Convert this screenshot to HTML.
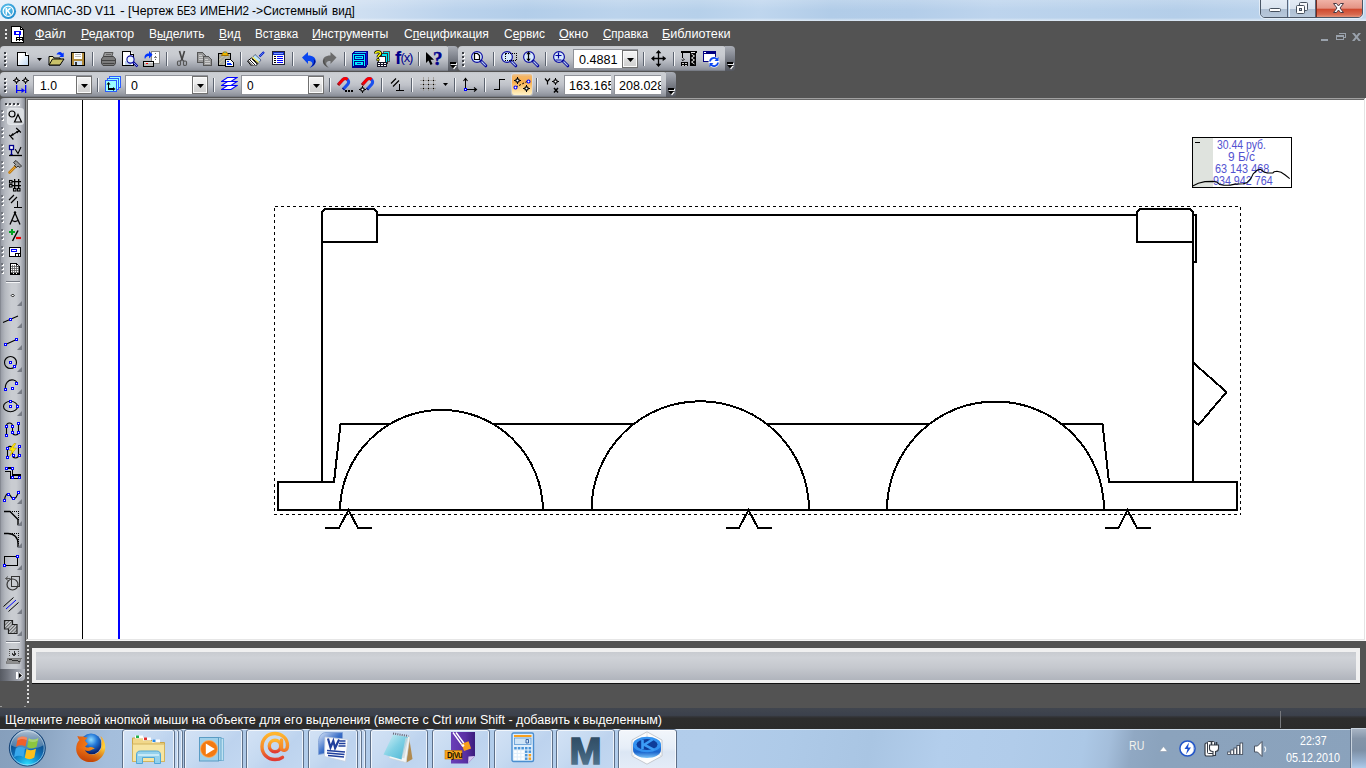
<!DOCTYPE html>
<html lang="ru">
<head>
<meta charset="utf-8">
<title>КОМПАС-3D V11</title>
<style>
*{box-sizing:border-box;margin:0;padding:0}
html,body{width:1366px;height:768px;overflow:hidden;background:#535353;font-family:"Liberation Sans",sans-serif;}
.abs{position:absolute}
#titlebar{left:0;top:0;width:1366px;height:21px;background:linear-gradient(100deg,#e6eef8 0,#e2ebf6 150px,#d9e6f4 300px,#cadcf0 380px,#bad2ec 450px,#b2cde9 520px,#bbd3ec 610px,#b6d0ea 690px,#bfd6ee 750px,#b1cce8 820px,#b3cde9 900px,#bdd4ed 980px,#b8d1eb 1080px,#b4cee9 1160px,#bbd3ec 1260px,#c2d8ef 1366px)}
#titlebar .shade{left:0;top:0;width:1366px;height:21px;background:linear-gradient(180deg,rgba(255,255,255,.18) 0,rgba(255,255,255,0) 50%,rgba(255,255,255,0) 85%,rgba(255,255,255,.55) 100%)}
#title{left:21px;top:3px;font-size:12px;line-height:14px;color:#000;white-space:nowrap;letter-spacing:-0.05px}
#menubar{left:0;top:21px;width:1366px;height:25px;background:#535353}
.mi{position:absolute;top:26px;font-size:13px;line-height:15px;color:#fff;white-space:nowrap}
.mi u{text-decoration:underline;text-underline-offset:1px}
.tb{position:absolute;height:25px;border-radius:4px 0 0 4px;background:linear-gradient(180deg,#bfc3ca 0,#ced1d6 12%,#c3c6cc 50%,#a9adb6 85%,#8f939c 100%)}
.tbend{position:absolute;height:25px;width:10px;border-radius:0 4px 4px 0;background:linear-gradient(180deg,#8b8f98 0,#6f737c 50%,#4d5058 100%)}
.sep{position:absolute;width:2px;height:15px;background:linear-gradient(90deg,#6d7078 0,#6d7078 50%,#e6e8eb 50%,#e6e8eb 100%)}
.grip{position:absolute;width:3px;height:16px;background:repeating-linear-gradient(180deg,#3a3a3a 0,#3a3a3a 2px,transparent 2px,transparent 4px)}
.grip:after{content:"";position:absolute;left:1px;top:1px;width:2px;height:16px;background:repeating-linear-gradient(180deg,#fff 0,#fff 1px,transparent 1px,transparent 4px);opacity:.8}
.combo{position:absolute;height:19px;background:#fff;font-size:13px;line-height:19px;color:#000;padding-left:5px;white-space:nowrap;overflow:hidden}
.cbtn{position:absolute;width:16px;height:19px;background:linear-gradient(180deg,#f2f2f2 0,#e4e4e4 50%,#cfcfcf 100%);border:1px solid #8a8a8a;border-radius:1px}
.cbtn:after{content:"";position:absolute;left:3px;top:7px;border:4px solid transparent;border-top:4px solid #000;border-bottom:0}
#canvas{left:28px;top:100px;width:1336px;height:539px;background:#fff}
#lefttb{left:0;top:98px;width:25px;height:572px;border-radius:4px 0 0 0;background:linear-gradient(90deg,#8d919b 0,#a6aab3 12%,#c2c5cb 40%,#cdd0d5 60%,#c0c3ca 80%,#9da1aa 100%)}
#status{left:0;top:708px;width:1366px;height:21px;background:linear-gradient(180deg,#41464f 0,#3c414c 35%,#333437 42%,#2d2d2d 50%,#2b2b2b 100%)}
#statustext{left:5px;top:712px;font-size:12.5px;line-height:15px;color:#fff;white-space:nowrap}
#taskbar{left:0;top:729px;width:1366px;height:39px;background:linear-gradient(100deg,#869fbc 0,#8aa4c1 40px,#98b1ce 70px,#a4bedc 110px,#b0cbe9 300px,#b2cdeb 700px,#aecae8 780px,#a9c5e3 860px,#b3ceec 930px,#b1ccea 1000px,#acc8e6 1070px,#a4bedb 1095px,#90a8c3 1118px,#8ba3bd 1145px,#8aa2bc 1366px)}
.wtxt{left:1192px;width:100px;text-align:center;font-size:11px;letter-spacing:-0.25px;line-height:12px;color:#5b5bd0;white-space:nowrap}
</style>
</head>
<body>
<!-- TITLE BAR -->
<div id="titlebar" class="abs"><div class="shade abs"></div></div>

<div class="abs" style="left:20.6px;top:4px;font-size:12px;line-height:14px;color:#000;font-weight:400;white-space:pre;transform:scaleX(1.0015);transform-origin:0 0;">КОМПАС-3D V11</div>
<div class="abs" style="left:120.1px;top:4px;font-size:12px;line-height:14px;color:#000;font-weight:400;white-space:pre;transform:scaleX(1.1750);transform-origin:0 0;">-</div>
<div class="abs" style="left:127.5px;top:4px;font-size:12px;line-height:14px;color:#000;font-weight:400;white-space:pre;transform:scaleX(1.0283);transform-origin:0 0;">[Чертеж</div>
<div class="abs" style="left:176.7px;top:4px;font-size:12px;line-height:14px;color:#000;font-weight:400;white-space:pre;transform:scaleX(0.8393);transform-origin:0 0;">БЕЗ</div>
<div class="abs" style="left:199.5px;top:4px;font-size:12px;line-height:14px;color:#000;font-weight:400;white-space:pre;transform:scaleX(0.9705);transform-origin:0 0;">ИМЕНИ2</div>
<div class="abs" style="left:252.2px;top:4px;font-size:12px;line-height:14px;color:#000;font-weight:400;white-space:pre;transform:scaleX(1.0117);transform-origin:0 0;">-&gt;Системный</div>
<div class="abs" style="left:331.9px;top:4px;font-size:12px;line-height:14px;color:#000;font-weight:400;white-space:pre;transform:scaleX(0.9692);transform-origin:0 0;">вид]</div>
<svg class="abs" style="left:0px;top:3px" width="16.500" height="16.500" viewBox="0 0 17 17"><defs><radialGradient id="kg" cx="40%" cy="35%" r="70%"><stop offset="0" stop-color="#6fd0f5"/><stop offset="1" stop-color="#1a86c8"/></radialGradient></defs><circle cx="8.500" cy="8.500" r="8" fill="url(#kg)"/><circle cx="8.500" cy="8.500" r="5.300" fill="none" stroke="#fff" stroke-width="1.300"/><path d="M6.500 5.200V12M6.500 8.800L10.800 5.300M7.800 8L11 12" stroke="#fff" stroke-width="1.500" fill="none"/></svg>
<div class="abs" style="left:1260px;top:-1px;width:103px;height:19px;border:1px solid #4a5666;border-radius:0 0 5px 5px;overflow:hidden;box-shadow:0 0 0 1px rgba(255,255,255,.55)">
<div class="abs" style="left:0;top:0;width:27px;height:18px;background:linear-gradient(180deg,#e3ebf5 0,#d9e3ef 48%,#aebfd3 52%,#b9c9dc 100%);border-right:1px solid #59657a"></div>
<div class="abs" style="left:28px;top:0;width:27px;height:18px;background:linear-gradient(180deg,#e3ebf5 0,#d9e3ef 48%,#aebfd3 52%,#b9c9dc 100%);border-right:1px solid #59657a;border-left:1px solid rgba(255,255,255,.7)"></div>
<div class="abs" style="left:55px;top:0;width:47px;height:18px;background:linear-gradient(180deg,#f0b2a6 0,#e49384 45%,#cf4a30 52%,#d8694f 80%,#e8a48e 100%);border-left:1px solid #7a2a1c"></div>
</div>
<svg class="abs" style="left:1260px;top:0" width="104" height="18" viewBox="0 0 104 18">
<rect x="9.500" y="8.500" width="11" height="3" rx="1" fill="#fff" stroke="#46505e" stroke-width="1"/>
<rect x="39.500" y="2.500" width="8" height="8" rx="1" fill="#f4f6f9" stroke="#46505e"/>
<rect x="36.500" y="5.500" width="8" height="8" rx="1" fill="#fff" stroke="#46505e"/>
<rect x="39.500" y="8.500" width="2" height="2" fill="#c7d2df" stroke="#46505e"/>
<path d="M73.500 3.500h3l2 2.500l2-2.500h3l-3.500 4.500l3.500 4.500h-3l-2-2.500l-2 2.500h-3l3.500-4.500z" fill="#fff" stroke="#4a3a44" stroke-width="1"/>
</svg>
<!--CAPTION-->
<!-- MENU BAR -->
<div id="menubar" class="abs"></div>
<svg class="abs" style="left:1318px;top:30px" width="46" height="14" viewBox="0 0 46 14" shape-rendering="crispEdges">
<rect x="3" y="9" width="7" height="2" fill="#9aa2ac"/>
<path d="M20.500 3.500h7v4h-2M18.500 5.500h7v4h-7z" fill="none" stroke="#9aa2ac" stroke-width="1"/><rect x="18" y="5" width="8" height="2" fill="#9aa2ac"/>
<path d="M34 3h2.500l2 2.500l2-2.500h2.500l-3.200 4l3.200 4h-2.500l-2-2.500l-2 2.500h-2.500l3.200-4z" fill="#9aa2ac" shape-rendering="auto"/>
</svg>
<div class="abs" style="left:5px;top:29px;width:2px;height:2px;background:#e8e8e8"></div><div class="abs" style="left:5px;top:33px;width:2px;height:2px;background:#e8e8e8"></div><div class="abs" style="left:5px;top:37px;width:2px;height:2px;background:#e8e8e8"></div>
<svg class="abs" style="left:11px;top:26px" width="14" height="17" viewBox="0 0 14 17" shape-rendering="crispEdges"><path d="M.5.500h9l3 3v12.500h-12z" fill="#fff" stroke="#000"/><path d="M9.500.500v3h3" fill="none" stroke="#000"/><rect x="3" y="5" width="7" height="4" fill="#00f"/><rect x="5" y="6" width="3" height="2" fill="#fff"/><rect x="8" y="6" width="1" height="5" fill="#00f"/><rect x="5" y="11" width="7" height="4" fill="#000"/><rect x="6" y="12" width="2" height="1" fill="#fff"/><rect x="9" y="12" width="2" height="1" fill="#fff"/><rect x="6" y="14" width="2" height="1" fill="#fff"/><rect x="9" y="14" width="2" height="1" fill="#fff"/></svg>
<div class="abs" style="left:35.1px;top:27px;font-size:12.5px;line-height:15px;color:#fff;font-weight:400;white-space:pre;transform:scaleX(0.9989);transform-origin:0 0;text-underline-offset:1px;"><u>Ф</u>айл</div>
<div class="abs" style="left:80.5px;top:27px;font-size:12.5px;line-height:15px;color:#fff;font-weight:400;white-space:pre;transform:scaleX(0.9886);transform-origin:0 0;text-underline-offset:1px;"><u>Р</u>едактор</div>
<div class="abs" style="left:148.70000000000002px;top:27px;font-size:12.5px;line-height:15px;color:#fff;font-weight:400;white-space:pre;transform:scaleX(0.9641);transform-origin:0 0;text-underline-offset:1px;">В<u>ы</u>делить</div>
<div class="abs" style="left:218.70000000000002px;top:27px;font-size:12.5px;line-height:15px;color:#fff;font-weight:400;white-space:pre;transform:scaleX(0.9547);transform-origin:0 0;text-underline-offset:1px;"><u>В</u>ид</div>
<div class="abs" style="left:254.70000000000002px;top:27px;font-size:12.5px;line-height:15px;color:#fff;font-weight:400;white-space:pre;transform:scaleX(0.9318);transform-origin:0 0;text-underline-offset:1px;">Вст<u>а</u>вка</div>
<div class="abs" style="left:312.4px;top:27px;font-size:12.5px;line-height:15px;color:#fff;font-weight:400;white-space:pre;transform:scaleX(0.9801);transform-origin:0 0;text-underline-offset:1px;"><u>И</u>нструменты</div>
<div class="abs" style="left:404.0px;top:27px;font-size:12.5px;line-height:15px;color:#fff;font-weight:400;white-space:pre;transform:scaleX(0.9673);transform-origin:0 0;text-underline-offset:1px;">С<u>п</u>ецификация</div>
<div class="abs" style="left:503.59999999999997px;top:27px;font-size:12.5px;line-height:15px;color:#fff;font-weight:400;white-space:pre;transform:scaleX(0.9553);transform-origin:0 0;text-underline-offset:1px;">С<u>е</u>рвис</div>
<div class="abs" style="left:558.6999999999999px;top:27px;font-size:12.5px;line-height:15px;color:#fff;font-weight:400;white-space:pre;transform:scaleX(1.0053);transform-origin:0 0;text-underline-offset:1px;"><u>О</u>кно</div>
<div class="abs" style="left:602.6px;top:27px;font-size:12.5px;line-height:15px;color:#fff;font-weight:400;white-space:pre;transform:scaleX(0.9236);transform-origin:0 0;text-underline-offset:1px;"><u>С</u>правка</div>
<div class="abs" style="left:662.3px;top:27px;font-size:12.5px;line-height:15px;color:#fff;font-weight:400;white-space:pre;transform:scaleX(1.0113);transform-origin:0 0;text-underline-offset:1px;"><u>Б</u>иблиотеки</div>
<!--MENU-->
<div class="abs" style="left:0px;top:46px;width:449px;height:25px;border-radius:4px 3px 0 4px;background:linear-gradient(180deg,#c3c6cb 0,#cccfd4 8%,#c8cbd0 35%,#bfc2c9 52%,#adb1b9 68%,#9ca0a9 84%,#8d919a 94%,#6f737c 100%)"></div>
<div class="abs" style="left:448px;top:46px;width:10px;height:25px;border-radius:0 4px 3px 0;background:linear-gradient(180deg,#a9adb5 0,#8d919a 30%,#6c7079 65%,#54575f 100%)"></div><div class="abs" style="left:451px;top:63px;width:6px;height:2px;background:#fff;opacity:.85"></div><div class="abs" style="left:450px;top:62px;width:6px;height:2px;background:#000"></div><svg class="abs" style="left:450px;top:65px" width="8" height="5" viewBox="0 0 8 5"><path d="M1.200 1h5.600l-2.800 3.500z" fill="#fff"/><path d="M0 0h6l-3 3.500z" fill="#000"/></svg>
<div class="abs" style="left:5px;top:53px;width:2px;height:2px;background:#fff"></div><div class="abs" style="left:4px;top:52px;width:2px;height:2px;background:#3b3e44"></div><div class="abs" style="left:5px;top:57px;width:2px;height:2px;background:#fff"></div><div class="abs" style="left:4px;top:56px;width:2px;height:2px;background:#3b3e44"></div><div class="abs" style="left:5px;top:61px;width:2px;height:2px;background:#fff"></div><div class="abs" style="left:4px;top:60px;width:2px;height:2px;background:#3b3e44"></div><div class="abs" style="left:5px;top:65px;width:2px;height:2px;background:#fff"></div><div class="abs" style="left:4px;top:64px;width:2px;height:2px;background:#3b3e44"></div>
<svg class="abs" style="left:16px;top:51px" width="16" height="16" viewBox="0 0 16 16" shape-rendering="crispEdges"><defs><linearGradient id="gn" x1="0" y1="0" x2="1" y2="1"><stop offset=".3" stop-color="#fff"/><stop offset="1" stop-color="#bcd6f2"/></linearGradient></defs><path d="M1.500 1.500h8l3 3v10h-11z" fill="url(#gn)" stroke="#000"/><path d="M9.500 1.500v3h3" fill="#fff" stroke="#000"/></svg>
<svg class="abs" style="left:37px;top:58px" width="6" height="4" viewBox="0 0 6 4"><path d="M0 0h5l-2.500 3z" fill="#000"/></svg>
<svg class="abs" style="left:48px;top:50px" width="17" height="17" viewBox="0 0 17 17"><path d="M1 6.500h4l1 1.500h6v7h-11z" fill="#f3efb0" stroke="#000" stroke-width="1"/><path d="M1 15l3.500-6h11.500l-4 6z" fill="#c9c26a" stroke="#000" stroke-width="1"/><path d="M8.500 4.500c1-3 4.500-3.500 6-1l1.200-1v4.500h-4.500l1.500-1.500c-1-1.500-3-1-4.200-1z" fill="#0033ff"/></svg>
<svg class="abs" style="left:70px;top:51px" width="16" height="16" viewBox="0 0 16 16" shape-rendering="crispEdges"><rect x="1.500" y="1.500" width="13" height="13" fill="#b08a3c" stroke="#000"/><rect x="4" y="2" width="8" height="6" fill="#fff"/><rect x="5" y="3" width="6" height="1" fill="#bbb"/><rect x="5" y="5" width="6" height="1" fill="#bbb"/><rect x="4" y="10" width="8" height="4" fill="#cfe0f5"/><rect x="5" y="11" width="2" height="3" fill="#333"/></svg>
<div class="abs" style="left:92px;top:52px;width:1px;height:14px;background:#5d6470"></div><div class="abs" style="left:93px;top:52px;width:1px;height:14px;background:#f4f5f7"></div>
<svg class="abs" style="left:100px;top:51px" width="17" height="16" viewBox="0 0 17 16"><path d="M4.500 1.500h8.500l-1.500 5h-8.500z" fill="#999" stroke="#555"/><path d="M1.500 8l2-2.500h10l2 2.500v4.500l-1.500 2h-11l-1.500-2z" fill="#7c7c7c" stroke="#444"/><path d="M2 9.500h13M2.500 12.500h12" stroke="#444"/><path d="M6 3.500h5" stroke="#666"/></svg>
<svg class="abs" style="left:121px;top:50px" width="18" height="18" viewBox="0 0 18 18" shape-rendering="crispEdges"><path d="M1.500 1.500h8l3 3v11h-11z" fill="#fff" stroke="#000"/><path d="M9.500 1.500v3h3" fill="#fff" stroke="#000"/><rect x="4" y="11" width="6" height="4" fill="#c0d4ec"/><circle cx="9.500" cy="9.500" r="3.600" fill="#e8f3fc" stroke="#0a0aa0" stroke-width="1.100" shape-rendering="auto"/><path d="M12.200 12.200l4.300 4.300" stroke="#00009c" stroke-width="2.400" shape-rendering="auto"/><path d="M12.800 12.800l3.400 3.400" stroke="#b8d0ee" stroke-width=".8" shape-rendering="auto"/></svg>
<svg class="abs" style="left:143px;top:50px" width="18" height="18" viewBox="0 0 18 18" shape-rendering="crispEdges"><rect x="8.500" y="1.500" width="8" height="12" fill="#fff" stroke="#888"/><path d="M12.500 3v9" stroke="#666" stroke-dasharray="1 2"/><rect x="11" y="7" width="3" height="1" fill="#888"/><rect x=".5" y="11.500" width="10" height="5" fill="#bbb" stroke="#000"/><rect x="1" y="12" width="9" height="1" fill="#eee"/><rect x="3" y="13" width="2" height="1" fill="#f00"/><path d="M2 9c-1.500-3 1-6 4-5.500v-2.500l3.500 3.800l-3.500 3.700v-2.500c-1.500-.3-3 .5-4 3z" fill="#0033ff" shape-rendering="auto"/></svg>
<div class="abs" style="left:166px;top:52px;width:1px;height:14px;background:#5d6470"></div><div class="abs" style="left:167px;top:52px;width:1px;height:14px;background:#f4f5f7"></div>
<svg class="abs" style="left:176px;top:50px" width="12" height="17" viewBox="0 0 12 17"><path d="M3.500 1l2.500 8.500l2.500-8.500" fill="none" stroke="#444" stroke-width="1.600"/><path d="M6 9l-2 2.500M6 9l2 2.500" stroke="#444" stroke-width="1.200"/><rect x="1.500" y="11" width="3" height="4.500" rx="1.200" fill="none" stroke="#555" stroke-width="1.200"/><rect x="7.500" y="11" width="3" height="4.500" rx="1.200" fill="none" stroke="#555" stroke-width="1.200"/></svg>
<svg class="abs" style="left:196px;top:51px" width="17" height="16" viewBox="0 0 17 16" shape-rendering="crispEdges"><path d="M1.500 1.500h5l3 3v6.500h-8z" fill="#999" stroke="#555"/><path d="M3 4h3M3 6h4M3 8h4" stroke="#ccc"/><path d="M7.500 5.500h5l3 3v6h-8z" fill="#999" stroke="#555"/><path d="M9 8h3M9 10h5M9 12h5" stroke="#ccc"/></svg>
<svg class="abs" style="left:217px;top:50px" width="18" height="18" viewBox="0 0 18 18" shape-rendering="crispEdges"><rect x="1.500" y="3.500" width="12" height="12" fill="#a9a9a2" stroke="#000"/><path d="M2 14l11-10M2 10l7-6M6 15l7-6" stroke="#d8d8a8" stroke-width="1" shape-rendering="auto" opacity=".7"/><path d="M4.500 5.500l2-3.500h3l2 3.500z" fill="#f0b800" stroke="#a07000" shape-rendering="auto"/><rect x="7" y="2" width="2" height="1" fill="#6a8"/><path d="M8.500 9.500h5l3 3v4h-8z" fill="#fff" stroke="#000"/><rect x="10" y="11" width="2" height="1" fill="#03f"/><rect x="10" y="14" width="5" height="1" fill="#03f"/><rect x="10" y="12.500" width="4" height="1" fill="#03f"/></svg>
<div class="abs" style="left:240px;top:52px;width:1px;height:14px;background:#5d6470"></div><div class="abs" style="left:241px;top:52px;width:1px;height:14px;background:#f4f5f7"></div>
<svg class="abs" style="left:247px;top:51px" width="18" height="15" viewBox="0 0 18 15"><path d="M12.500 5.500l4.500-4.500" stroke="#0018c8" stroke-width="2.200"/><path d="M13 5l3.500-3.500" stroke="#7aa0ff" stroke-width=".7"/><path d="M8 3.500l6 5.500l-2 2.500l-6.500-5z" fill="#b8e4ff" stroke="#224" stroke-width=".6"/><path d="M6 5.500l6 5.500l-1.500 2l-6.500-5z" fill="#f1e86a"/><path d="M4.500 7l6.500 5.500l-2.500 2.500h-4l-4-5z" fill="#fff" stroke="#000" stroke-width="1"/><path d="M3 9l5 5M1.500 10l4.500 4.500M5 8l5 5" stroke="#000" stroke-width=".9"/></svg>
<svg class="abs" style="left:272px;top:51px" width="13" height="15" viewBox="0 0 13 15" shape-rendering="crispEdges"><rect x=".5" y=".5" width="12" height="13" fill="#fff" stroke="#223"/><rect x="1" y="1" width="11" height="3" fill="#1430c8"/><rect x="2" y="2" width="9" height="1" fill="#7a9aff"/><rect x="2" y="5" width="2" height="1" fill="#000"/><rect x="2" y="7" width="2" height="1" fill="#000"/><rect x="2" y="9" width="2" height="1" fill="#000"/><rect x="2" y="11" width="2" height="1" fill="#000"/><rect x="5" y="5" width="6" height="1" fill="#00f"/><rect x="5" y="7" width="6" height="1" fill="#00f"/><rect x="5" y="9" width="6" height="1" fill="#00f"/><rect x="5" y="11" width="6" height="1" fill="#00f"/></svg>
<div class="abs" style="left:292px;top:52px;width:1px;height:14px;background:#5d6470"></div><div class="abs" style="left:293px;top:52px;width:1px;height:14px;background:#f4f5f7"></div>
<svg class="abs" style="left:302px;top:52px" width="15" height="17" viewBox="0 0 15 17"><path d="M0 5.500l6-5.500v3.500c5 0 8.500 2.500 7.500 7c-.5 2.500-3 4.500-6 5.500c2.500-2 3.500-4 2.500-5.500c-.8-1.300-2.200-1.500-4-1.500v3z" fill="#0a46f0"/><path d="M11.500 7c1.500 2.500 0 6-3.500 8.500c2.500-1 5-3 5.500-5.500c.2-1.200-.5-2.200-2-3z" fill="#00108c"/></svg>
<svg class="abs" style="left:322px;top:52px" width="15" height="17" viewBox="0 0 15 17"><g transform="translate(14.500 0) scale(-1 1)"><path d="M0 5.500l6-5.500v3.500c5 0 8.500 2.500 7.500 7c-.5 2.500-3 4.500-6 5.500c2.500-2 3.500-4 2.500-5.500c-.8-1.300-2.200-1.500-4-1.500v3z" fill="#6b6b6b"/><path d="M11.500 7c1.500 2.500 0 6-3.500 8.500c2.500-1 5-3 5.500-5.500c.2-1.200-.5-2.200-2-3z" fill="#4d4d4d"/></g></svg>
<div class="abs" style="left:344px;top:52px;width:1px;height:14px;background:#5d6470"></div><div class="abs" style="left:345px;top:52px;width:1px;height:14px;background:#f4f5f7"></div>
<svg class="abs" style="left:352px;top:51px" width="17" height="17" viewBox="0 0 17 17" shape-rendering="crispEdges"><path d="M2.500.500h13v13l-2 2.500h-13v-13z" fill="#0a18e0" stroke="#000090"/><path d="M3 1.500h11" stroke="#30c8ff"/><rect x=".5" y="2.500" width="13" height="13" fill="#00f0ff" stroke="#000090"/><rect x="2" y="4" width="10" height="5" fill="#000090"/><rect x="3" y="5" width="8" height="3" fill="#00f0ff"/><rect x="4" y="6" width="6" height="1" fill="#0a30c0"/><rect x="2" y="10" width="10" height="5" fill="#000090"/><rect x="3" y="11" width="8" height="3" fill="#00f0ff"/><rect x="5" y="12" width="4" height="1" fill="#0a30c0"/></svg>
<svg class="abs" style="left:374px;top:50px" width="17" height="18" viewBox="0 0 17 18" shape-rendering="crispEdges"><rect x="9.500" y="1.500" width="6" height="10" fill="#00e8f0" stroke="#555"/><rect x="7.500" y="3.500" width="6" height="10" fill="#00e8f0" stroke="#333"/><rect x="4.500" y="6.500" width="7" height="6" fill="#fff" stroke="#223"/><rect x="3.500" y="12.500" width="9" height="4" fill="#fff" stroke="#112"/><rect x="4" y="14" width="8" height="1" fill="#112"/><rect x="6" y="13" width="1" height="3" fill="#112"/><rect x="9" y="13" width="1" height="3" fill="#112"/><path d="M1.500 3.500c0-2.500 5-2.500 5 0c0 1.500-2.500 1.800-2.500 3.700" fill="none" stroke="#000" stroke-width="3" shape-rendering="auto"/><circle cx="4" cy="9.700" r="1.600" fill="#000" shape-rendering="auto"/><path d="M1.500 3.500c0-2.500 5-2.500 5 0c0 1.500-2.500 1.800-2.500 3.700" fill="none" stroke="#ff0" stroke-width="1.500" shape-rendering="auto"/><circle cx="4" cy="9.700" r=".9" fill="#ff0" shape-rendering="auto"/></svg>
<div class="abs" style="left:395px;top:47px;font-size:19px;line-height:22px;font-weight:700;color:#00008b;letter-spacing:-1px">f</div><div class="abs" style="left:400.500px;top:50px;font-size:13px;line-height:16px;color:#00008b;letter-spacing:-1.200px">(x)</div>
<div class="abs" style="left:418px;top:52px;width:1px;height:14px;background:#5d6470"></div><div class="abs" style="left:419px;top:52px;width:1px;height:14px;background:#f4f5f7"></div>
<svg class="abs" style="left:425px;top:51px" width="18" height="16" viewBox="0 0 18 16"><path d="M1 1v11l2.500-2.500l2 4.500l2-1l-2-4.200h3.500z" fill="#000"/></svg>
<div class="abs" style="left:433px;top:47.500px;font-size:19px;line-height:21px;font-weight:700;color:#00008b;font-family:'Liberation Serif',serif;-webkit-text-stroke:.4px #00008b">?</div>
<div class="abs" style="left:458px;top:46px;width:268px;height:25px;border-radius:4px 3px 0 4px;background:linear-gradient(180deg,#c3c6cb 0,#cccfd4 8%,#c8cbd0 35%,#bfc2c9 52%,#adb1b9 68%,#9ca0a9 84%,#8d919a 94%,#6f737c 100%)"></div>
<div class="abs" style="left:725px;top:46px;width:10px;height:25px;border-radius:0 4px 3px 0;background:linear-gradient(180deg,#a9adb5 0,#8d919a 30%,#6c7079 65%,#54575f 100%)"></div><div class="abs" style="left:728px;top:63px;width:6px;height:2px;background:#fff;opacity:.85"></div><div class="abs" style="left:727px;top:62px;width:6px;height:2px;background:#000"></div><svg class="abs" style="left:727px;top:65px" width="8" height="5" viewBox="0 0 8 5"><path d="M1.200 1h5.600l-2.800 3.500z" fill="#fff"/><path d="M0 0h6l-3 3.500z" fill="#000"/></svg>
<div class="abs" style="left:463px;top:53px;width:2px;height:2px;background:#fff"></div><div class="abs" style="left:462px;top:52px;width:2px;height:2px;background:#3b3e44"></div><div class="abs" style="left:463px;top:57px;width:2px;height:2px;background:#fff"></div><div class="abs" style="left:462px;top:56px;width:2px;height:2px;background:#3b3e44"></div><div class="abs" style="left:463px;top:61px;width:2px;height:2px;background:#fff"></div><div class="abs" style="left:462px;top:60px;width:2px;height:2px;background:#3b3e44"></div><div class="abs" style="left:463px;top:65px;width:2px;height:2px;background:#fff"></div><div class="abs" style="left:462px;top:64px;width:2px;height:2px;background:#3b3e44"></div>
<svg class="abs" style="left:470px;top:50px" width="18" height="18" viewBox="0 0 18 18"><circle cx="7" cy="7" r="5.400" fill="#d6e9fc" stroke="#0a0aa0" stroke-width="1.150"/><path d="M11 11l4.800 4.800" stroke="#0a0aa0" stroke-width="3" stroke-linecap="round"/><path d="M11.500 11.500l4.200 4.200" stroke="#b4cdee" stroke-width="1.100"/><path d="M4.500 3.500h3l2 2v4h-5z" fill="#fff" stroke="#000" stroke-width="1.200"/></svg>
<div class="abs" style="left:493px;top:52px;width:1px;height:14px;background:#5d6470"></div><div class="abs" style="left:494px;top:52px;width:1px;height:14px;background:#f4f5f7"></div>
<svg class="abs" style="left:500px;top:50px" width="19" height="18" viewBox="0 0 19 18"><circle cx="7" cy="7" r="5.400" fill="#d6e9fc" stroke="#0a0aa0" stroke-width="1.150"/><path d="M11 11l4.800 4.800" stroke="#0a0aa0" stroke-width="3" stroke-linecap="round"/><path d="M11.500 11.500l4.200 4.200" stroke="#b4cdee" stroke-width="1.100"/><path d="M5.500 3.500h11v6.500h-11z" fill="none" stroke="#000" stroke-width="1" stroke-dasharray="1 1" shape-rendering="crispEdges"/></svg>
<svg class="abs" style="left:522px;top:50px" width="18" height="18" viewBox="0 0 18 18"><circle cx="7" cy="7" r="5.400" fill="#d6e9fc" stroke="#0a0aa0" stroke-width="1.150"/><path d="M11 11l4.800 4.800" stroke="#0a0aa0" stroke-width="3" stroke-linecap="round"/><path d="M11.500 11.500l4.200 4.200" stroke="#b4cdee" stroke-width="1.100"/><path d="M6.500 3v7" stroke="#000" stroke-width="1.200"/><path d="M6.500 1.500l2.200 2.800h-4.400zM6.500 11.500l2.200-2.800h-4.400z" fill="#000"/></svg>
<div class="abs" style="left:545px;top:52px;width:1px;height:14px;background:#5d6470"></div><div class="abs" style="left:546px;top:52px;width:1px;height:14px;background:#f4f5f7"></div>
<svg class="abs" style="left:552px;top:50px" width="18" height="18" viewBox="0 0 18 18"><circle cx="7" cy="7" r="5.400" fill="#d6e9fc" stroke="#0a0aa0" stroke-width="1.150"/><path d="M11 11l4.800 4.800" stroke="#0a0aa0" stroke-width="3" stroke-linecap="round"/><path d="M11.500 11.500l4.200 4.200" stroke="#b4cdee" stroke-width="1.100"/><path d="M3.500 5.500h6M6.500 2.500v6M3.500 10h6" stroke="#00009c" stroke-width="1.200"/></svg>
<div class="abs" style="left:573px;top:49px;width:65px;height:20px;background:#8f9299"></div><div class="abs" style="left:574px;top:50px;width:48px;height:18px;background:#fff;overflow:hidden"></div><div class="abs" style="left:574px;top:50px;width:48px;height:18px;overflow:hidden"><div class="abs" style="left:4.5px;top:3px;font-size:12.5px;line-height:15px;color:#000;font-weight:400;white-space:pre;transform:scaleX(1.0096);transform-origin:0 0;">0.4881</div></div><div class="abs" style="left:622px;top:50px;width:16px;height:18px;background:linear-gradient(180deg,#f3f3f3 0,#ebebeb 45%,#dddddd 50%,#cfcfcf 100%);border:1px solid #707070;box-shadow:inset 0 0 0 1px #fbfbfb"></div><svg class="abs" style="left:627px;top:58px" width="8" height="5" viewBox="0 0 8 5"><path d="M0 0h7l-3.500 4z" fill="#000"/></svg>
<div class="abs" style="left:643px;top:52px;width:1px;height:14px;background:#5d6470"></div><div class="abs" style="left:644px;top:52px;width:1px;height:14px;background:#f4f5f7"></div>
<svg class="abs" style="left:651px;top:50px" width="16" height="17" viewBox="0 0 16 17"><path d="M7.500 2v13M1.500 8.500h13" stroke="#000" stroke-width="1.300"/><path d="M7.500 0l2.800 3.300h-5.600zM7.500 17l2.800-3.300h-5.600zM0 8.500l3.300-2.800v5.600zM15 8.500l-3.300-2.800v5.600z" fill="#000"/></svg>
<div class="abs" style="left:673px;top:52px;width:1px;height:14px;background:#5d6470"></div><div class="abs" style="left:674px;top:52px;width:1px;height:14px;background:#f4f5f7"></div>
<svg class="abs" style="left:681px;top:51px" width="17" height="16" viewBox="0 0 17 16" shape-rendering="crispEdges"><rect x="0" y="0" width="16" height="2" fill="#000"/><rect x="9" y="2" width="6" height="13" fill="#000"/><path d="M10 1l1 1l1-1l1 1l1-1M10.500 3l3 2l-3 2l3 2l-3 2l3 2" fill="none" stroke="#fff" stroke-width=".9" shape-rendering="auto"/><rect x="1" y="2" width="1" height="5" fill="#000"/><path d="M2.500 7.500a1 1 0 1 1-1.500 1" fill="none" stroke="#000" shape-rendering="auto"/><rect x="0" y="11" width="7" height="4" fill="#000"/><rect x="1" y="12" width="2" height="1" fill="#ccc"/><rect x="4" y="12" width="2" height="1" fill="#ccc"/><rect x="1" y="14" width="2" height="1" fill="#ccc"/><rect x="4" y="14" width="2" height="1" fill="#ccc"/></svg>
<svg class="abs" style="left:703px;top:51px" width="17" height="17" viewBox="0 0 17 17" shape-rendering="crispEdges"><rect x=".5" y=".5" width="12" height="10" fill="#fff" stroke="#000080"/><rect x="0" y="0" width="13" height="3" fill="#000080"/><rect x="1" y="1" width="2" height="1" fill="#fff"/><circle cx="11" cy="11" r="5.500" fill="#fff" shape-rendering="auto"/><path d="M7 10.500a4 4 0 0 1 7-2.200M15 11.500a4 4 0 0 1-7 2.200" fill="none" stroke="#0a46f0" stroke-width="1.800" shape-rendering="auto"/><path d="M15.500 6v4h-4zM6.500 16v-4h4z" fill="#0a46f0" shape-rendering="auto"/></svg>
<div class="abs" style="left:0px;top:72px;width:667px;height:25px;border-radius:4px 3px 0 4px;background:linear-gradient(180deg,#c3c6cb 0,#cccfd4 8%,#c8cbd0 35%,#bfc2c9 52%,#adb1b9 68%,#9ca0a9 84%,#8d919a 94%,#6f737c 100%)"></div>
<div class="abs" style="left:666px;top:72px;width:10px;height:25px;border-radius:0 4px 3px 0;background:linear-gradient(180deg,#a9adb5 0,#8d919a 30%,#6c7079 65%,#54575f 100%)"></div><div class="abs" style="left:669px;top:89px;width:6px;height:2px;background:#fff;opacity:.85"></div><div class="abs" style="left:668px;top:88px;width:6px;height:2px;background:#000"></div><svg class="abs" style="left:668px;top:91px" width="8" height="5" viewBox="0 0 8 5"><path d="M1.200 1h5.600l-2.800 3.500z" fill="#fff"/><path d="M0 0h6l-3 3.500z" fill="#000"/></svg>
<div class="abs" style="left:5px;top:79px;width:2px;height:2px;background:#fff"></div><div class="abs" style="left:4px;top:78px;width:2px;height:2px;background:#3b3e44"></div><div class="abs" style="left:5px;top:83px;width:2px;height:2px;background:#fff"></div><div class="abs" style="left:4px;top:82px;width:2px;height:2px;background:#3b3e44"></div><div class="abs" style="left:5px;top:87px;width:2px;height:2px;background:#fff"></div><div class="abs" style="left:4px;top:86px;width:2px;height:2px;background:#3b3e44"></div><div class="abs" style="left:5px;top:91px;width:2px;height:2px;background:#fff"></div><div class="abs" style="left:4px;top:90px;width:2px;height:2px;background:#3b3e44"></div>
<svg class="abs" style="left:12px;top:76px" width="18" height="18" viewBox="0 0 18 18" shape-rendering="crispEdges"><path d="M1.0 4.5h7M4.5 1.0v7" stroke="#000" stroke-width="1.200"/><circle cx="4.5" cy="4.5" r="1.700" fill="#fff" stroke="#000" stroke-width="1.200" shape-rendering="auto"/><path d="M10.0 4.5h7M13.5 1.0v7" stroke="#000" stroke-width="1.200"/><circle cx="13.5" cy="4.5" r="1.700" fill="#fff" stroke="#000" stroke-width="1.200" shape-rendering="auto"/><rect x="4" y="9" width="1" height="8" fill="#00f"/><rect x="13" y="9" width="1" height="8" fill="#00f"/><rect x="4" y="14" width="8" height="1" fill="#00f"/><path d="M13 14.500l-3.500-2.500v5z" fill="#00f" shape-rendering="auto"/><rect x="5" y="9" width="1" height="8" fill="#00f" opacity=".3"/><rect x="14" y="9" width="1" height="8" fill="#00f" opacity=".3"/></svg>
<div class="abs" style="left:33px;top:75px;width:59px;height:20px;background:#8f9299"></div><div class="abs" style="left:34px;top:76px;width:42px;height:18px;background:#fff;overflow:hidden"></div><div class="abs" style="left:34px;top:76px;width:42px;height:18px;overflow:hidden"><div class="abs" style="left:5.5px;top:3px;font-size:12.5px;line-height:15px;color:#000;font-weight:400;white-space:pre;transform:scaleX(0.9775);transform-origin:0 0;">1.0</div></div><div class="abs" style="left:76px;top:76px;width:16px;height:18px;background:linear-gradient(180deg,#f3f3f3 0,#ebebeb 45%,#dddddd 50%,#cfcfcf 100%);border:1px solid #707070;box-shadow:inset 0 0 0 1px #fbfbfb"></div><svg class="abs" style="left:81px;top:84px" width="8" height="5" viewBox="0 0 8 5"><path d="M0 0h7l-3.500 4z" fill="#000"/></svg>
<div class="abs" style="left:97px;top:78px;width:1px;height:14px;background:#5d6470"></div><div class="abs" style="left:98px;top:78px;width:1px;height:14px;background:#f4f5f7"></div>
<svg class="abs" style="left:105px;top:76px" width="17" height="17" viewBox="0 0 17 17" shape-rendering="crispEdges"><rect x="4.500" y=".5" width="11" height="11" fill="#9ff" stroke="#2a5cff"/><rect x="2.500" y="2.500" width="11" height="11" fill="#9ff" stroke="#2a5cff"/><rect x=".5" y="4.500" width="11" height="11" fill="#9ff" stroke="#2a5cff"/><path d="M3.500 8v5h5" fill="none" stroke="#000" stroke-width="1.400"/><path d="M3.500 6l2 2.500h-4zM10.500 13l-2.500-2v4z" fill="#000" shape-rendering="auto"/></svg>
<div class="abs" style="left:125px;top:75px;width:83px;height:20px;background:#8f9299"></div><div class="abs" style="left:126px;top:76px;width:66px;height:18px;background:#fff;overflow:hidden"></div><div class="abs" style="left:126px;top:76px;width:66px;height:18px;overflow:hidden"><div class="abs" style="left:4.900000000000006px;top:3px;font-size:12.5px;line-height:15px;color:#000;font-weight:400;white-space:pre;transform:scaleX(0.9924);transform-origin:0 0;">0</div></div><div class="abs" style="left:192px;top:76px;width:16px;height:18px;background:linear-gradient(180deg,#f3f3f3 0,#ebebeb 45%,#dddddd 50%,#cfcfcf 100%);border:1px solid #707070;box-shadow:inset 0 0 0 1px #fbfbfb"></div><svg class="abs" style="left:197px;top:84px" width="8" height="5" viewBox="0 0 8 5"><path d="M0 0h7l-3.500 4z" fill="#000"/></svg>
<div class="abs" style="left:213px;top:78px;width:1px;height:14px;background:#5d6470"></div><div class="abs" style="left:214px;top:78px;width:1px;height:14px;background:#f4f5f7"></div>
<svg class="abs" style="left:221px;top:77px" width="17" height="15" viewBox="0 0 17 15"><path d="M6.500 8.5h9.500l-6 4h-9.500z" fill="#fff" stroke="#00f" stroke-width="1.100"/><path d="M6.500 4.5h9.500l-6 4h-9.500z" fill="#fff" stroke="#00f" stroke-width="1.100"/><path d="M6.500 0.5h9.500l-6 4h-9.500z" fill="#fff" stroke="#00f" stroke-width="1.100"/></svg>
<div class="abs" style="left:241px;top:75px;width:83px;height:20px;background:#8f9299"></div><div class="abs" style="left:242px;top:76px;width:66px;height:18px;background:#fff;overflow:hidden"></div><div class="abs" style="left:242px;top:76px;width:66px;height:18px;overflow:hidden"><div class="abs" style="left:5.099999999999994px;top:3px;font-size:12.5px;line-height:15px;color:#000;font-weight:400;white-space:pre;transform:scaleX(0.9492);transform-origin:0 0;">0</div></div><div class="abs" style="left:308px;top:76px;width:16px;height:18px;background:linear-gradient(180deg,#f3f3f3 0,#ebebeb 45%,#dddddd 50%,#cfcfcf 100%);border:1px solid #707070;box-shadow:inset 0 0 0 1px #fbfbfb"></div><svg class="abs" style="left:313px;top:84px" width="8" height="5" viewBox="0 0 8 5"><path d="M0 0h7l-3.500 4z" fill="#000"/></svg>
<div class="abs" style="left:329px;top:78px;width:1px;height:14px;background:#5d6470"></div><div class="abs" style="left:330px;top:78px;width:1px;height:14px;background:#f4f5f7"></div>
<svg class="abs" style="left:336px;top:76px" width="18" height="17" viewBox="0 0 18 17" shape-rendering="crispEdges"><g transform="translate(1.500 1) rotate(42 7 6.500) scale(.82)" shape-rendering="auto"><path d="M2 13v-7a6 6 0 0 1 12 0v7h-3.800v-7a2.200 2.200 0 0 0-4.400 0v7z" fill="#1a50ee"/><path d="M2 13v-7a6 6 0 0 1 6-6v3.800a2.200 2.200 0 0 0-2.200 2.200v7z" fill="#f80000"/><path d="M2 13h3.800v1.600h-3.800z" fill="#a00000"/><path d="M10.200 13h3.800v1.600h-3.800z" fill="#00108c"/></g><rect x="9" y="14" width="2" height="2" fill="#000"/><rect x="12" y="14" width="2" height="2" fill="#000"/><rect x="15" y="14" width="2" height="2" fill="#000"/></svg>
<svg class="abs" style="left:358px;top:76px" width="18" height="18" viewBox="0 0 18 18" shape-rendering="crispEdges"><g transform="translate(2 0)"><g transform="translate(1.500 1) rotate(42 7 6.500) scale(.82)" shape-rendering="auto"><path d="M2 13v-7a6 6 0 0 1 12 0v7h-3.800v-7a2.200 2.200 0 0 0-4.400 0v7z" fill="#1a50ee"/><path d="M2 13v-7a6 6 0 0 1 6-6v3.800a2.200 2.200 0 0 0-2.200 2.200v7z" fill="#f80000"/><path d="M2 13h3.800v1.600h-3.800z" fill="#a00000"/><path d="M10.200 13h3.800v1.600h-3.800z" fill="#00108c"/></g></g><path d="M1.0 13.5h7M4.5 10.0v7" stroke="#000" stroke-width="1.200"/><circle cx="4.5" cy="13.5" r="1.700" fill="#fff" stroke="#000" stroke-width="1.200" shape-rendering="auto"/></svg>
<div class="abs" style="left:381px;top:78px;width:1px;height:14px;background:#5d6470"></div><div class="abs" style="left:382px;top:78px;width:1px;height:14px;background:#f4f5f7"></div>
<svg class="abs" style="left:390px;top:78px" width="14" height="14" viewBox="0 0 14 14" shape-rendering="crispEdges"><path d="M1 5.500l5-5M3 8.500l6-6" stroke="#000" stroke-width="1.200" shape-rendering="auto"/><path d="M9.500 6v6.500M6 12.500h7.500" stroke="#000" stroke-width="1.200"/></svg>
<div class="abs" style="left:411px;top:78px;width:1px;height:14px;background:#5d6470"></div><div class="abs" style="left:412px;top:78px;width:1px;height:14px;background:#f4f5f7"></div>
<svg class="abs" style="left:420px;top:77px" width="16" height="15" viewBox="0 0 16 15" shape-rendering="crispEdges"><rect x="3" y="0" width="1" height="14" fill="#8b8378" opacity=".55"/><rect x="8" y="0" width="1" height="14" fill="#8b8378" opacity=".55"/><rect x="13" y="0" width="1" height="14" fill="#8b8378" opacity=".55"/><rect x="0" y="3" width="16" height="1" fill="#8b8378" opacity=".55"/><rect x="0" y="7" width="16" height="1" fill="#8b8378" opacity=".55"/><rect x="0" y="11" width="16" height="1" fill="#8b8378" opacity=".55"/><rect x="3" y="3" width="1" height="1" fill="#000"/><rect x="3" y="7" width="1" height="1" fill="#000"/><rect x="3" y="11" width="1" height="1" fill="#000"/><rect x="8" y="3" width="1" height="1" fill="#000"/><rect x="8" y="7" width="1" height="1" fill="#000"/><rect x="8" y="11" width="1" height="1" fill="#000"/><rect x="13" y="3" width="1" height="1" fill="#000"/><rect x="13" y="7" width="1" height="1" fill="#000"/><rect x="13" y="11" width="1" height="1" fill="#000"/></svg>
<svg class="abs" style="left:443px;top:83px" width="6" height="4" viewBox="0 0 6 4"><path d="M0 0h5l-2.500 3z" fill="#000"/></svg>
<div class="abs" style="left:454px;top:78px;width:1px;height:14px;background:#5d6470"></div><div class="abs" style="left:455px;top:78px;width:1px;height:14px;background:#f4f5f7"></div>
<svg class="abs" style="left:462px;top:77px" width="16" height="16" viewBox="0 0 16 16" shape-rendering="crispEdges"><path d="M3.500 2v9.500M5 12.500h9" stroke="#000" stroke-width="1.100"/><path d="M1.500 4l2-2.500l2 2.500M12 10.500l2.500 2l-2.500 2" fill="none" stroke="#000" stroke-width="1.100" shape-rendering="auto"/><rect x="2" y="11" width="3" height="3" fill="#00f"/><rect x="3" y="12" width="1" height="1" fill="#fff"/></svg>
<div class="abs" style="left:484px;top:78px;width:1px;height:14px;background:#5d6470"></div><div class="abs" style="left:485px;top:78px;width:1px;height:14px;background:#f4f5f7"></div>
<svg class="abs" style="left:493px;top:78px" width="13" height="13" viewBox="0 0 13 13" shape-rendering="crispEdges"><path d="M1 11.500h5.500v-10h5.500" fill="none" stroke="#000" stroke-width="1.200"/></svg>
<div class="abs" style="left:512px;top:74px;width:20px;height:21px;border-radius:2px;background:linear-gradient(180deg,#e9c9a4 0,#f4b565 12%,#f9ae4c 38%,#fcc878 60%,#fee0a0 80%,#fff2c8 100%);box-shadow:0 0 0 1px rgba(255,255,255,.35)"></div>
<svg class="abs" style="left:513px;top:76px" width="18" height="17" viewBox="0 0 18 17" shape-rendering="crispEdges"><path d="M1.0 4.5h7M4.5 1.0v7" stroke="#000" stroke-width="1.200"/><circle cx="4.5" cy="4.5" r="1.700" fill="#fff" stroke="#000" stroke-width="1.200" shape-rendering="auto"/><path d="M10.0 12.5h7M13.5 9.0v7" stroke="#000" stroke-width="1.200"/><circle cx="13.5" cy="12.5" r="1.700" fill="#fff" stroke="#000" stroke-width="1.200" shape-rendering="auto"/><path d="M3 11l12-6" stroke="#000" stroke-width="1" stroke-dasharray="2 1.500" shape-rendering="auto"/><circle cx="2.500" cy="11.500" r="1.500" fill="#fff" stroke="#00f" stroke-width="1.100" shape-rendering="auto"/><circle cx="15.500" cy="5.500" r="1.500" fill="#fff" stroke="#00f" stroke-width="1.100" shape-rendering="auto"/></svg>
<div class="abs" style="left:536px;top:78px;width:1px;height:14px;background:#5d6470"></div><div class="abs" style="left:537px;top:78px;width:1px;height:14px;background:#f4f5f7"></div>
<svg class="abs" style="left:544px;top:77px" width="16" height="17" viewBox="0 0 16 17" shape-rendering="crispEdges"><path d="M1 1.500l2.500 3l2.500-3M3.500 4.500v3" fill="none" stroke="#000" stroke-width="1.200" shape-rendering="auto"/><path d="M8.0 4.5h7M11.5 1.0v7" stroke="#000" stroke-width="1.200"/><circle cx="11.5" cy="4.5" r="1.700" fill="#fff" stroke="#000" stroke-width="1.200" shape-rendering="auto"/><path d="M10 11l4 4.500M14 11l-4 4.500" stroke="#000" stroke-width="1.500" shape-rendering="auto"/></svg>
<div class="abs" style="left:564px;top:75px;width:47px;height:20px;background:#8f9299"></div><div class="abs" style="left:565px;top:76px;width:46px;height:18px;background:#fff;overflow:hidden"></div><div class="abs" style="left:565px;top:76px;width:46px;height:18px;overflow:hidden"><div class="abs" style="left:4.2000000000000455px;top:3px;font-size:12.5px;line-height:15px;color:#000;font-weight:400;white-space:pre;transform:scaleX(1.0047);transform-origin:0 0;">163.165</div></div>
<div class="abs" style="left:614px;top:75px;width:47px;height:20px;background:#8f9299"></div><div class="abs" style="left:615px;top:76px;width:46px;height:18px;background:#fff;overflow:hidden"></div><div class="abs" style="left:615px;top:76px;width:46px;height:18px;overflow:hidden"><div class="abs" style="left:3.8999999999999773px;top:3px;font-size:12.5px;line-height:15px;color:#000;font-weight:400;white-space:pre;transform:scaleX(1.0025);transform-origin:0 0;">208.028</div></div>
<!--TOOLBARS-->
<!-- CANVAS -->
<div class="abs" style="left:26px;top:98px;width:1340px;height:1px;background:#a0a0a0"></div>
<div class="abs" style="left:27px;top:99px;width:1339px;height:1px;background:#696969"></div>
<div class="abs" style="left:26px;top:98px;width:1px;height:542px;background:#a0a0a0"></div>
<div class="abs" style="left:27px;top:99px;width:1px;height:541px;background:#696969"></div>
<div id="canvas" class="abs"></div>
<div class="abs" style="left:27px;top:639px;width:1339px;height:1px;background:#e6e6e6"></div>
<div class="abs" style="left:26px;top:640px;width:1340px;height:1px;background:#f6f6f6"></div>
<div class="abs" style="left:1364px;top:99px;width:1px;height:541px;background:#e4e4e4"></div>
<div class="abs" style="left:1365px;top:98px;width:1px;height:543px;background:#fff"></div>
<svg class="abs" style="left:28px;top:100px" width="1335" height="539" viewBox="28 100 1335 539" shape-rendering="crispEdges" fill="none" stroke="#000">
<!-- sheet frame lines -->
<rect x="82" y="100" width="1" height="539" fill="#000" stroke="none"/>
<rect x="118" y="100" width="2" height="539" fill="#0000ff" stroke="none"/>
<!-- selection dashed frame -->
<path d="M274.5 206.5H1240.5V514.5H274.5Z" stroke-width="1" stroke-dasharray="3 3"/>
<g stroke-width="2" stroke-linejoin="miter">
<!-- body -->
<path d="M322 482V212L325 209H374L377 212V242H322"/>
<path d="M377 215H1137"/>
<path d="M1193 242H1137V212L1140 209H1190L1193 212V482"/>
<path d="M1194 215H1196V262H1194"/>
<path d="M1193 362.5L1226.5 392L1198.5 425L1193 420"/>
<!-- base -->
<path d="M322 482H278V510H1237V482H1109L1102.500 424H1061.500M929.500 424H766M634.500 424H494M389.500 424H340.500L334 482H322"/>
<!-- arcs -->
<path d="M340 510A101.510 101.510 0 0 1 543 510"/>
<path d="M591.500 510A108.700 108.700 0 0 1 809 510"/>
<path d="M887 510A108.500 108.500 0 0 1 1104 510"/>
<!-- support marks -->
<path d="M325 528H339L348.500 510L358 528H372"/>
<path d="M725.500 528H739L748.500 510L758 528H772"/>
<path d="M1104.500 528H1118.500L1127.500 510L1137 528H1151"/>
</g>
</svg>
<!-- info widget -->
<div class="abs" style="left:1192px;top:137px;width:100px;height:51px;border:1px solid #000;background:#fff"></div>
<div class="abs" style="left:1193px;top:138px;width:20px;height:49px;background:#dfe3de"></div>
<div class="abs" style="left:1195px;top:142px;width:5px;height:1px;background:#000"></div>
<div class="abs" style="left:1217.3999999999999px;top:138px;font-size:12px;line-height:14px;color:#5252d0;font-weight:400;white-space:pre;transform:scaleX(0.8693);transform-origin:0 0;">30.44 руб.</div>
<div class="abs" style="left:1228.3999999999999px;top:150px;font-size:12px;line-height:14px;color:#5252d0;font-weight:400;white-space:pre;transform:scaleX(0.9920);transform-origin:0 0;">9 Б/с</div>
<div class="abs" style="left:1215.3px;top:162px;font-size:12px;line-height:14px;color:#5252d0;font-weight:400;white-space:pre;transform:scaleX(0.9024);transform-origin:0 0;">63 143 468</div>
<div class="abs" style="left:1212.6px;top:174px;font-size:12px;line-height:14px;color:#5252d0;font-weight:400;white-space:pre;transform:scaleX(0.8931);transform-origin:0 0;">934 942 764</div>
<!--WTXT-->
<svg class="abs" style="left:1192px;top:137px" width="100" height="51" viewBox="0 0 100 51" fill="none" stroke="#000" stroke-width="1.100"><path d="M0.7 49.1L6.3 46.2L12.9 44.6L21.0 44.4L25.2 45.2L27.6 47.5L31.7 48.3L38.3 48.1L43.2 47.1L51.4 46.8L54.7 45.8L58.8 41.7L61.2 36.8L65.3 33.1L68.6 32.3L71.9 35.0L75.2 36.0L80.9 36.0L82.1 34.8L85.0 34.2L89.1 35.2L93.2 38.0L97.7 41.7"/></svg>
<!--DRAWING-->
<div class="abs" style="left:0;top:98px;width:25px;height:572px;border-radius:4px 0 0 0;background:linear-gradient(90deg,#7b7f88 0,#9da1aa 6%,#b4b8bf 20%,#c9ccd1 45%,#c9ccd1 65%,#b9bcc3 82%,#999da6 94%,#80848d 100%)"></div>
<div class="abs" style="left:0;top:669px;width:25px;height:12px;border-radius:0 0 4px 0;background:linear-gradient(90deg,#565a62 0,#70747d 30%,#9a9ea7 70%,#b0b4bc 100%)"></div>
<svg class="abs" style="left:16px;top:672px" width="8" height="7" viewBox="0 0 8 7"><rect x="0" y="0" width="2" height="7" fill="#fff"/><path d="M3 0l4 3.500l-4 3.500z" fill="#fff"/><path d="M3 1v5l3-2.500z" fill="#000"/></svg>
<div class="abs" style="left:6px;top:104px;width:2px;height:2px;background:#fff"></div><div class="abs" style="left:5px;top:103px;width:2px;height:2px;background:#3b3e44"></div>
<div class="abs" style="left:10px;top:104px;width:2px;height:2px;background:#fff"></div><div class="abs" style="left:9px;top:103px;width:2px;height:2px;background:#3b3e44"></div>
<div class="abs" style="left:14px;top:104px;width:2px;height:2px;background:#fff"></div><div class="abs" style="left:13px;top:103px;width:2px;height:2px;background:#3b3e44"></div>
<div class="abs" style="left:18px;top:104px;width:2px;height:2px;background:#fff"></div><div class="abs" style="left:17px;top:103px;width:2px;height:2px;background:#3b3e44"></div>
<div class="abs" style="left:8px;top:109px;width:15px;height:15px;border-radius:2px;background:#dcdfe3;box-shadow:0 0 0 1px rgba(240,242,245,.7)"></div>
<div class="abs" style="left:2px;top:111px;width:2px;height:2px;background:#fff"></div><div class="abs" style="left:1px;top:110px;width:2px;height:2px;background:#70747c"></div><div class="abs" style="left:2px;top:115px;width:2px;height:2px;background:#fff"></div><div class="abs" style="left:1px;top:114px;width:2px;height:2px;background:#70747c"></div><div class="abs" style="left:2px;top:119px;width:2px;height:2px;background:#fff"></div><div class="abs" style="left:1px;top:118px;width:2px;height:2px;background:#70747c"></div>
<div class="abs" style="left:2px;top:128px;width:2px;height:2px;background:#fff"></div><div class="abs" style="left:1px;top:127px;width:2px;height:2px;background:#70747c"></div><div class="abs" style="left:2px;top:132px;width:2px;height:2px;background:#fff"></div><div class="abs" style="left:1px;top:131px;width:2px;height:2px;background:#70747c"></div><div class="abs" style="left:2px;top:136px;width:2px;height:2px;background:#fff"></div><div class="abs" style="left:1px;top:135px;width:2px;height:2px;background:#70747c"></div>
<div class="abs" style="left:2px;top:145px;width:2px;height:2px;background:#fff"></div><div class="abs" style="left:1px;top:144px;width:2px;height:2px;background:#70747c"></div><div class="abs" style="left:2px;top:149px;width:2px;height:2px;background:#fff"></div><div class="abs" style="left:1px;top:148px;width:2px;height:2px;background:#70747c"></div><div class="abs" style="left:2px;top:153px;width:2px;height:2px;background:#fff"></div><div class="abs" style="left:1px;top:152px;width:2px;height:2px;background:#70747c"></div>
<div class="abs" style="left:2px;top:162px;width:2px;height:2px;background:#fff"></div><div class="abs" style="left:1px;top:161px;width:2px;height:2px;background:#70747c"></div><div class="abs" style="left:2px;top:166px;width:2px;height:2px;background:#fff"></div><div class="abs" style="left:1px;top:165px;width:2px;height:2px;background:#70747c"></div><div class="abs" style="left:2px;top:170px;width:2px;height:2px;background:#fff"></div><div class="abs" style="left:1px;top:169px;width:2px;height:2px;background:#70747c"></div>
<div class="abs" style="left:2px;top:179px;width:2px;height:2px;background:#fff"></div><div class="abs" style="left:1px;top:178px;width:2px;height:2px;background:#70747c"></div><div class="abs" style="left:2px;top:183px;width:2px;height:2px;background:#fff"></div><div class="abs" style="left:1px;top:182px;width:2px;height:2px;background:#70747c"></div><div class="abs" style="left:2px;top:187px;width:2px;height:2px;background:#fff"></div><div class="abs" style="left:1px;top:186px;width:2px;height:2px;background:#70747c"></div>
<div class="abs" style="left:2px;top:196px;width:2px;height:2px;background:#fff"></div><div class="abs" style="left:1px;top:195px;width:2px;height:2px;background:#70747c"></div><div class="abs" style="left:2px;top:200px;width:2px;height:2px;background:#fff"></div><div class="abs" style="left:1px;top:199px;width:2px;height:2px;background:#70747c"></div><div class="abs" style="left:2px;top:204px;width:2px;height:2px;background:#fff"></div><div class="abs" style="left:1px;top:203px;width:2px;height:2px;background:#70747c"></div>
<div class="abs" style="left:2px;top:213px;width:2px;height:2px;background:#fff"></div><div class="abs" style="left:1px;top:212px;width:2px;height:2px;background:#70747c"></div><div class="abs" style="left:2px;top:217px;width:2px;height:2px;background:#fff"></div><div class="abs" style="left:1px;top:216px;width:2px;height:2px;background:#70747c"></div><div class="abs" style="left:2px;top:221px;width:2px;height:2px;background:#fff"></div><div class="abs" style="left:1px;top:220px;width:2px;height:2px;background:#70747c"></div>
<div class="abs" style="left:2px;top:230px;width:2px;height:2px;background:#fff"></div><div class="abs" style="left:1px;top:229px;width:2px;height:2px;background:#70747c"></div><div class="abs" style="left:2px;top:234px;width:2px;height:2px;background:#fff"></div><div class="abs" style="left:1px;top:233px;width:2px;height:2px;background:#70747c"></div><div class="abs" style="left:2px;top:238px;width:2px;height:2px;background:#fff"></div><div class="abs" style="left:1px;top:237px;width:2px;height:2px;background:#70747c"></div>
<div class="abs" style="left:2px;top:247px;width:2px;height:2px;background:#fff"></div><div class="abs" style="left:1px;top:246px;width:2px;height:2px;background:#70747c"></div><div class="abs" style="left:2px;top:251px;width:2px;height:2px;background:#fff"></div><div class="abs" style="left:1px;top:250px;width:2px;height:2px;background:#70747c"></div><div class="abs" style="left:2px;top:255px;width:2px;height:2px;background:#fff"></div><div class="abs" style="left:1px;top:254px;width:2px;height:2px;background:#70747c"></div>
<div class="abs" style="left:2px;top:264px;width:2px;height:2px;background:#fff"></div><div class="abs" style="left:1px;top:263px;width:2px;height:2px;background:#70747c"></div><div class="abs" style="left:2px;top:268px;width:2px;height:2px;background:#fff"></div><div class="abs" style="left:1px;top:267px;width:2px;height:2px;background:#70747c"></div><div class="abs" style="left:2px;top:272px;width:2px;height:2px;background:#fff"></div><div class="abs" style="left:1px;top:271px;width:2px;height:2px;background:#70747c"></div>
<svg class="abs" style="left:7px;top:108px" width="17" height="17" viewBox="0 0 17 17"><circle cx="5" cy="6" r="3" fill="none" stroke="#000" stroke-width="1.200"/><path d="M11 6.500l3.500 7.500h-7z" fill="none" stroke="#000" stroke-width="1.200"/></svg>
<svg class="abs" style="left:7px;top:125px" width="17" height="17" viewBox="0 0 17 17"><path d="M3.500 11l9-5.500" stroke="#000" stroke-width="1.100"/><path d="M2.200 9.800l4.200 4.700M9.200 3l4.700 4.500" stroke="#000" stroke-width="1.200"/><path d="M3.800 10.800l3.200-.5l-1.500-2.300zM12.200 5.700l-3.200.5l1.500 2.300z" fill="#000"/></svg>
<svg class="abs" style="left:7px;top:142px" width="17" height="17" viewBox="0 0 17 17"><rect x="2.500" y="3.500" width="4" height="4" fill="#fff" stroke="#00008b" stroke-width="1.300"/><path d="M4.500 8v5" stroke="#00008b" stroke-width="1.300"/><path d="M2 13.500h13" stroke="#000" stroke-width="1.300"/><path d="M3 13l1.500-2l1.500 2z" fill="#00008b"/><path d="M8.200 7.300l2.800 4.300l3-6.600" fill="none" stroke="#000" stroke-width="1.100"/></svg>
<svg class="abs" style="left:7px;top:159px" width="17" height="17" viewBox="0 0 17 17"><path d="M2.500 13.500l7-7" stroke="#c07a10" stroke-width="2.600" stroke-linecap="round"/><path d="M2.500 13.500l7-7" stroke="#e8a838" stroke-width="1"/><path d="M6.500 3.500l2.500-2l5.500 5.500l-1.500 1.500l-2-1.500l-1.500 1.500l-2-2l1-1z" fill="#9a9a9a" stroke="#222" stroke-width=".9"/></svg>
<svg class="abs" style="left:7px;top:176px" width="17" height="17" viewBox="0 0 17 17"><rect x="7" y="3" width="1.300" height="9" fill="#000"/><rect x="11" y="3" width="1.300" height="9" fill="#000"/><rect x="5" y="5" width="9" height="1.300" fill="#000"/><rect x="5" y="9" width="9" height="1.300" fill="#000"/><rect x="2.5" y="4.5" width="2.500" height="2.500" fill="none" stroke="#000" stroke-width="1.100"/><rect x="2.5" y="8.5" width="2.500" height="2.500" fill="none" stroke="#000" stroke-width="1.100"/><rect x="6.5" y="12.5" width="2.500" height="2.500" fill="none" stroke="#000" stroke-width="1.100"/><rect x="10.5" y="12.5" width="2.500" height="2.500" fill="none" stroke="#000" stroke-width="1.100"/></svg>
<svg class="abs" style="left:7px;top:193px" width="17" height="17" viewBox="0 0 17 17"><path d="M2 7l5-5M4 10l6-6" stroke="#000" stroke-width="1.200"/><path d="M10.500 8v6.500M7 14.500h7.500" stroke="#000" stroke-width="1.300" shape-rendering="crispEdges"/></svg>
<svg class="abs" style="left:7px;top:210px" width="17" height="17" viewBox="0 0 17 17"><path d="M8 3l-5 11.500M8 3l5 11.500M4.800 10.500l3.200 1l3.200-1" fill="none" stroke="#000" stroke-width="1.300"/><circle cx="8" cy="2.500" r="1.200" fill="#000"/></svg>
<svg class="abs" style="left:7px;top:227px" width="17" height="17" viewBox="0 0 17 17"><path d="M11 3.500l-5.500 10.500" stroke="#000" stroke-width="1.500"/><path d="M2 5h6M5 2v6" stroke="#00a020" stroke-width="2"/><path d="M9 11h5" stroke="#f00000" stroke-width="2.200"/></svg>
<svg class="abs" style="left:7px;top:244px" width="17" height="17" viewBox="0 0 17 17" shape-rendering="crispEdges"><rect x="2.500" y="3.500" width="11" height="9" fill="#fff" stroke="#000" stroke-width="1.300"/><rect x="4" y="5" width="6" height="3" fill="#00f"/><rect x="5" y="6" width="4" height="1" fill="#fff"/><rect x="8" y="9" width="6" height="4" fill="#000"/><rect x="9" y="10" width="2" height="2" fill="#fff"/><rect x="12" y="10" width="1" height="2" fill="#fff"/></svg>
<svg class="abs" style="left:7px;top:261px" width="17" height="17" viewBox="0 0 17 17" shape-rendering="crispEdges"><path d="M3.500 2.500h6l3 3v8h-9z" fill="#fff" stroke="#000" stroke-width="1.200"/><path d="M9.500 2.500v3h3" fill="none" stroke="#000" stroke-width="1"/><rect x="5" y="4" width="1" height="9" fill="#555" opacity=".75"/><rect x="7" y="4" width="1" height="9" fill="#555" opacity=".75"/><rect x="9" y="4" width="1" height="9" fill="#555" opacity=".75"/><rect x="11" y="4" width="1" height="9" fill="#555" opacity=".75"/><rect x="4" y="5" width="8" height="1" fill="#555" opacity=".75"/><rect x="4" y="7" width="8" height="1" fill="#555" opacity=".75"/><rect x="4" y="9" width="8" height="1" fill="#555" opacity=".75"/><rect x="4" y="11" width="8" height="1" fill="#555" opacity=".75"/><rect x="4" y="12" width="8" height="1" fill="#000"/><rect x="6" y="12" width="1" height="1" fill="#fff"/><rect x="9" y="12" width="1" height="1" fill="#fff"/></svg>
<div class="abs" style="left:6px;top:281px;width:14px;height:1px;background:#777b84"></div><div class="abs" style="left:6px;top:282px;width:14px;height:1px;background:#f4f5f7"></div>
<svg class="abs" style="left:2px;top:287px" width="22" height="22" viewBox="0 0 22 22"><path d="M9.200 8.500l1.500-1.500l1.500 1.500l-1.500 1.500z" fill="#fff" stroke="#000" stroke-width=".9"/></svg>
<svg class="abs" style="left:17px;top:301px" width="5" height="5" viewBox="0 0 5 5"><path d="M5 0v5h-5z" fill="#777b84"/></svg>
<svg class="abs" style="left:2px;top:309px" width="22" height="22" viewBox="0 0 22 22"><path d="M1 13.500l15-6.500" stroke="#000" stroke-width="1.100"/><rect x="7" y="9" width="3" height="3" fill="#00f" shape-rendering="crispEdges"/><rect x="8" y="10" width="1" height="1" fill="#fff" shape-rendering="crispEdges"/></svg>
<svg class="abs" style="left:17px;top:323px" width="5" height="5" viewBox="0 0 5 5"><path d="M5 0v5h-5z" fill="#777b84"/></svg>
<svg class="abs" style="left:2px;top:331px" width="22" height="22" viewBox="0 0 22 22"><path d="M3.500 13.500l11-5" stroke="#000" stroke-width="1.100"/><rect x="2" y="12" width="3" height="3" fill="#00f" shape-rendering="crispEdges"/><rect x="3" y="13" width="1" height="1" fill="#fff" shape-rendering="crispEdges"/><rect x="13" y="7" width="3" height="3" fill="#00f" shape-rendering="crispEdges"/><rect x="14" y="8" width="1" height="1" fill="#fff" shape-rendering="crispEdges"/></svg>
<svg class="abs" style="left:17px;top:345px" width="5" height="5" viewBox="0 0 5 5"><path d="M5 0v5h-5z" fill="#777b84"/></svg>
<svg class="abs" style="left:2px;top:353px" width="22" height="22" viewBox="0 0 22 22"><circle cx="8.500" cy="9.500" r="6" fill="none" stroke="#000" stroke-width="1.100"/><rect x="7" y="8" width="3" height="3" fill="#00f" shape-rendering="crispEdges"/><rect x="8" y="9" width="1" height="1" fill="#fff" shape-rendering="crispEdges"/><rect x="11" y="12" width="3" height="3" fill="#00f" shape-rendering="crispEdges"/><rect x="12" y="13" width="1" height="1" fill="#fff" shape-rendering="crispEdges"/></svg>
<svg class="abs" style="left:17px;top:367px" width="5" height="5" viewBox="0 0 5 5"><path d="M5 0v5h-5z" fill="#777b84"/></svg>
<svg class="abs" style="left:2px;top:375px" width="22" height="22" viewBox="0 0 22 22"><path d="M3.500 14.500c-1-6 3-10.500 8-9.500c2 .4 3 1.500 3.500 2.500" fill="none" stroke="#000" stroke-width="1.100"/><rect x="2" y="13" width="3" height="3" fill="#00f" shape-rendering="crispEdges"/><rect x="3" y="14" width="1" height="1" fill="#fff" shape-rendering="crispEdges"/><rect x="9" y="12" width="3" height="3" fill="#00f" shape-rendering="crispEdges"/><rect x="10" y="13" width="1" height="1" fill="#fff" shape-rendering="crispEdges"/><rect x="13" y="7" width="3" height="3" fill="#00f" shape-rendering="crispEdges"/><rect x="14" y="8" width="1" height="1" fill="#fff" shape-rendering="crispEdges"/></svg>
<svg class="abs" style="left:17px;top:389px" width="5" height="5" viewBox="0 0 5 5"><path d="M5 0v5h-5z" fill="#777b84"/></svg>
<svg class="abs" style="left:2px;top:397px" width="22" height="22" viewBox="0 0 22 22"><ellipse cx="8.500" cy="9.500" rx="7" ry="5.200" fill="none" stroke="#000" stroke-width="1.100"/><rect x="7" y="3" width="3" height="3" fill="#00f" shape-rendering="crispEdges"/><rect x="8" y="4" width="1" height="1" fill="#fff" shape-rendering="crispEdges"/><rect x="7" y="8" width="3" height="3" fill="#00f" shape-rendering="crispEdges"/><rect x="8" y="9" width="1" height="1" fill="#fff" shape-rendering="crispEdges"/><rect x="14" y="8" width="3" height="3" fill="#00f" shape-rendering="crispEdges"/><rect x="15" y="9" width="1" height="1" fill="#fff" shape-rendering="crispEdges"/></svg>
<svg class="abs" style="left:17px;top:411px" width="5" height="5" viewBox="0 0 5 5"><path d="M5 0v5h-5z" fill="#777b84"/></svg>
<svg class="abs" style="left:2px;top:419px" width="22" height="22" viewBox="0 0 22 22"><path d="M4.500 16v-9c0-4 6-4 6 0v6c0 4 6 4 6 0v-9" fill="none" stroke="#000" stroke-width="1.100"/><rect x="3" y="6" width="3" height="3" fill="#00f" shape-rendering="crispEdges"/><rect x="4" y="7" width="1" height="1" fill="#fff" shape-rendering="crispEdges"/><rect x="3" y="15" width="3" height="3" fill="#00f" shape-rendering="crispEdges"/><rect x="4" y="16" width="1" height="1" fill="#fff" shape-rendering="crispEdges"/><rect x="9" y="6" width="3" height="3" fill="#00f" shape-rendering="crispEdges"/><rect x="10" y="7" width="1" height="1" fill="#fff" shape-rendering="crispEdges"/><rect x="9" y="12" width="3" height="3" fill="#00f" shape-rendering="crispEdges"/><rect x="10" y="13" width="1" height="1" fill="#fff" shape-rendering="crispEdges"/><rect x="15" y="3" width="3" height="3" fill="#00f" shape-rendering="crispEdges"/><rect x="16" y="4" width="1" height="1" fill="#fff" shape-rendering="crispEdges"/><rect x="15" y="12" width="3" height="3" fill="#00f" shape-rendering="crispEdges"/><rect x="16" y="13" width="1" height="1" fill="#fff" shape-rendering="crispEdges"/></svg>
<svg class="abs" style="left:2px;top:441px" width="22" height="22" viewBox="0 0 22 22"><path d="M5.500 16v-8c0-4 5-3 5 0v6c0 4 6 4 6 0v-9" fill="none" stroke="#000" stroke-width="1.100"/><rect x="4" y="6" width="3" height="3" fill="#00f" shape-rendering="crispEdges"/><rect x="5" y="7" width="1" height="1" fill="#fff" shape-rendering="crispEdges"/><rect x="4" y="15" width="3" height="3" fill="#00f" shape-rendering="crispEdges"/><rect x="5" y="16" width="1" height="1" fill="#fff" shape-rendering="crispEdges"/><rect x="10" y="13" width="3" height="3" fill="#00f" shape-rendering="crispEdges"/><rect x="11" y="14" width="1" height="1" fill="#fff" shape-rendering="crispEdges"/><rect x="16" y="4" width="3" height="3" fill="#00f" shape-rendering="crispEdges"/><rect x="17" y="5" width="1" height="1" fill="#fff" shape-rendering="crispEdges"/><rect x="16" y="13" width="3" height="3" fill="#00f" shape-rendering="crispEdges"/><rect x="17" y="14" width="1" height="1" fill="#fff" shape-rendering="crispEdges"/><path d="M12 2.500l-5 7h3l-2.500 6l7-8.500h-3.500l3-4.500z" fill="#ffe800" stroke="#b89800" stroke-width=".5"/></svg>
<svg class="abs" style="left:2px;top:463px" width="22" height="22" viewBox="0 0 22 22"><path d="M2.500 5h8v7h8M2.500 8.500h6v7h10" fill="none" stroke="#000" stroke-width="1.300" shape-rendering="crispEdges"/><rect x="3" y="4" width="3" height="3" fill="#00f" shape-rendering="crispEdges"/><rect x="4" y="5" width="1" height="1" fill="#fff" shape-rendering="crispEdges"/><rect x="9" y="4" width="3" height="3" fill="#00f" shape-rendering="crispEdges"/><rect x="10" y="5" width="1" height="1" fill="#fff" shape-rendering="crispEdges"/><rect x="9" y="13" width="3" height="3" fill="#00f" shape-rendering="crispEdges"/><rect x="10" y="14" width="1" height="1" fill="#fff" shape-rendering="crispEdges"/><rect x="16" y="13" width="3" height="3" fill="#00f" shape-rendering="crispEdges"/><rect x="17" y="14" width="1" height="1" fill="#fff" shape-rendering="crispEdges"/></svg>
<svg class="abs" style="left:2px;top:485px" width="22" height="22" viewBox="0 0 22 22"><path d="M2.500 15.500c0-5 3-8 5-6s2 5 5 4s3-6 5-7.500" fill="none" stroke="#000" stroke-width="1.100"/><rect x="1" y="14" width="3" height="3" fill="#00f" shape-rendering="crispEdges"/><rect x="2" y="15" width="1" height="1" fill="#fff" shape-rendering="crispEdges"/><rect x="5" y="8" width="3" height="3" fill="#00f" shape-rendering="crispEdges"/><rect x="6" y="9" width="1" height="1" fill="#fff" shape-rendering="crispEdges"/><rect x="10" y="12" width="3" height="3" fill="#00f" shape-rendering="crispEdges"/><rect x="11" y="13" width="1" height="1" fill="#fff" shape-rendering="crispEdges"/><rect x="15" y="6" width="3" height="3" fill="#00f" shape-rendering="crispEdges"/><rect x="16" y="7" width="1" height="1" fill="#fff" shape-rendering="crispEdges"/></svg>
<svg class="abs" style="left:17px;top:499px" width="5" height="5" viewBox="0 0 5 5"><path d="M5 0v5h-5z" fill="#777b84"/></svg>
<svg class="abs" style="left:2px;top:507px" width="22" height="22" viewBox="0 0 22 22"><path d="M2 4.500h6l8 8v5.500" fill="none" stroke="#000" stroke-width="1.400"/><path d="M8 4.500h8.500v8" fill="none" stroke="#000" stroke-width="1" stroke-dasharray="1 1" shape-rendering="crispEdges"/></svg>
<svg class="abs" style="left:17px;top:521px" width="5" height="5" viewBox="0 0 5 5"><path d="M5 0v5h-5z" fill="#777b84"/></svg>
<svg class="abs" style="left:2px;top:529px" width="22" height="22" viewBox="0 0 22 22"><path d="M2 4.500h4c6 0 10 4 10 10v3.500" fill="none" stroke="#000" stroke-width="1.400"/><path d="M6 4.500h10.500v10" fill="none" stroke="#000" stroke-width="1" stroke-dasharray="1 1" shape-rendering="crispEdges"/></svg>
<svg class="abs" style="left:17px;top:543px" width="5" height="5" viewBox="0 0 5 5"><path d="M5 0v5h-5z" fill="#777b84"/></svg>
<svg class="abs" style="left:2px;top:551px" width="22" height="22" viewBox="0 0 22 22"><rect x="2.500" y="5.500" width="13" height="9" fill="none" stroke="#000" stroke-width="1.300" shape-rendering="crispEdges"/><rect x="1" y="13" width="3" height="3" fill="#00f" shape-rendering="crispEdges"/><rect x="2" y="14" width="1" height="1" fill="#fff" shape-rendering="crispEdges"/><rect x="14" y="4" width="3" height="3" fill="#00f" shape-rendering="crispEdges"/><rect x="15" y="5" width="1" height="1" fill="#fff" shape-rendering="crispEdges"/></svg>
<svg class="abs" style="left:17px;top:565px" width="5" height="5" viewBox="0 0 5 5"><path d="M5 0v5h-5z" fill="#777b84"/></svg>
<svg class="abs" style="left:2px;top:573px" width="22" height="22" viewBox="0 0 22 22"><rect x="9.500" y="3.500" width="8" height="10" fill="none" stroke="#333" stroke-width="1.200" shape-rendering="crispEdges"/><circle cx="10.500" cy="11.500" r="5.500" fill="none" stroke="#333" stroke-width="1.200"/><path d="M3.500 5.500h5M3.500 5.500l2.500-2M3.500 5.500l2.500 2" stroke="#555" stroke-width="1" fill="none"/></svg>
<svg class="abs" style="left:2px;top:595px" width="22" height="22" viewBox="0 0 22 22"><path d="M1.500 11.500l10-9M6.500 16.500l10-9" stroke="#000" stroke-width="1"/><path d="M4 14l10-9" stroke="#00f" stroke-width="1"/></svg>
<svg class="abs" style="left:17px;top:609px" width="5" height="5" viewBox="0 0 5 5"><path d="M5 0v5h-5z" fill="#777b84"/></svg>
<svg class="abs" style="left:2px;top:617px" width="22" height="22" viewBox="0 0 22 22"><defs><pattern id="hp" width="2.400" height="2.400" patternUnits="userSpaceOnUse" patternTransform="rotate(-45)"><rect width="2.400" height="2.400" fill="#cfd2d6"/><rect width="2.400" height="1.100" fill="#666"/></pattern></defs><path d="M2.500 3.500h8v4h4.500v9h-8.500v-4.500h-4z" fill="url(#hp)" stroke="#222" stroke-width="1.200"/></svg>
<svg class="abs" style="left:17px;top:631px" width="5" height="5" viewBox="0 0 5 5"><path d="M5 0v5h-5z" fill="#777b84"/></svg>
<div class="abs" style="left:6px;top:641px;width:14px;height:1px;background:#777b84"></div><div class="abs" style="left:6px;top:642px;width:14px;height:1px;background:#f4f5f7"></div>
<svg class="abs" style="left:5px;top:647px" width="17" height="18" viewBox="0 0 17 18" shape-rendering="crispEdges"><path d="M4.500 8.500v-6h9v6" fill="none" stroke="#555" stroke-width="1" stroke-dasharray="1 1" shape-rendering="crispEdges"/><path d="M4 2.500h10" stroke="#444" stroke-width="1" shape-rendering="crispEdges"/><path d="M9 3.500v5M7 6.500l2 2l2-2" fill="none" stroke="#333" stroke-width="1"/><path d="M3 11h13.500l-2 5h-13.500z" fill="#8e8e8e" stroke="#6a6a6a" stroke-width=".7"/><path d="M3.500 12.500l11 2" stroke="#222" stroke-width=".9"/></svg>
<!--LEFTTB-->
<div class="abs" style="left:27px;top:645px;width:2px;height:2px;background:#dcdcdc"></div>
<div class="abs" style="left:27px;top:649px;width:2px;height:2px;background:#dcdcdc"></div>
<div class="abs" style="left:27px;top:653px;width:2px;height:2px;background:#dcdcdc"></div>
<div class="abs" style="left:27px;top:657px;width:2px;height:2px;background:#dcdcdc"></div>
<div class="abs" style="left:27px;top:661px;width:2px;height:2px;background:#dcdcdc"></div>
<div class="abs" style="left:27px;top:665px;width:2px;height:2px;background:#dcdcdc"></div>
<div class="abs" style="left:27px;top:669px;width:2px;height:2px;background:#dcdcdc"></div>
<div class="abs" style="left:27px;top:673px;width:2px;height:2px;background:#dcdcdc"></div>
<div class="abs" style="left:27px;top:677px;width:2px;height:2px;background:#dcdcdc"></div>
<div class="abs" style="left:27px;top:681px;width:2px;height:2px;background:#dcdcdc"></div>
<div class="abs" style="left:27px;top:685px;width:2px;height:2px;background:#dcdcdc"></div>
<div class="abs" style="left:27px;top:689px;width:2px;height:2px;background:#dcdcdc"></div>
<div class="abs" style="left:27px;top:693px;width:2px;height:2px;background:#dcdcdc"></div>
<div class="abs" style="left:27px;top:697px;width:2px;height:2px;background:#dcdcdc"></div>
<div class="abs" style="left:27px;top:701px;width:2px;height:2px;background:#dcdcdc"></div>
<div class="abs" style="left:0;top:706px;width:2px;height:1px;background:#9a9a9a"></div><div class="abs" style="left:24px;top:706px;width:2px;height:1px;background:#9a9a9a"></div>
<div class="abs" style="left:32px;top:648px;width:1328px;height:35px;background:#f0f0f0;box-shadow:0 1px 0 #111"></div>
<div class="abs" style="left:36px;top:652px;width:1320px;height:28px;background:linear-gradient(180deg,#c8cbd0 0,#cfd2d7 20%,#c5c8ce 55%,#b0b4bc 100%)"></div>
<!--BOTTOM-->
<div id="status" class="abs"></div>
<div class="abs" style="left:4.5px;top:713px;font-size:12.5px;line-height:15px;color:#fff;font-weight:400;white-space:pre;transform:scaleX(1.0023);transform-origin:0 0;">Щелкните левой кнопкой мыши на объекте для его выделения (вместе с Ctrl или Shift - добавить к выделенным)</div>
<div class="abs" style="left:1280px;top:711px;width:1px;height:17px;background:#77797d"></div>
<div id="taskbar" class="abs"></div>
<div class="abs" style="left:0;top:729px;width:1366px;height:1px;background:rgba(225,236,248,.75)"></div>
<svg class="abs" style="left:8px;top:729px" width="39" height="39" viewBox="0 0 39 39"><defs><radialGradient id="so" cx="50%" cy="98%" r="85%"><stop offset="0" stop-color="#30e4ff"/><stop offset=".28" stop-color="#16a0dc"/><stop offset=".55" stop-color="#0f6cb4"/><stop offset="1" stop-color="#0a3c74"/></radialGradient><linearGradient id="sg" x1="0" y1="0" x2="0" y2="1"><stop offset="0" stop-color="#dfe8f0" stop-opacity=".8"/><stop offset="1" stop-color="#9fb8cc" stop-opacity=".35"/></linearGradient></defs>
<circle cx="19.300" cy="19" r="18" fill="url(#so)" stroke="#164478" stroke-width="1"/><circle cx="19.300" cy="19" r="16.900" fill="none" stroke="#b8dcf4" stroke-width=".9" opacity=".75"/>
<path d="M2.700 16a16.700 16.700 0 0 1 33.200 0c-8 5.500-25 5.500-33.200 0z" fill="url(#sg)"/>
<path d="M9.700 9c3-2 6.500-2.200 9.500-.3l-1.800 8.800c-3-1.800-6.300-1.600-9.300.2z" fill="#f0602a"/><path d="M20.800 9.300c3 1.800 6.300 1.600 9.600-.3l-1.800 8.800c-3.200 2-6.500 2-9.500.2z" fill="#8cc63f"/><path d="M7.700 19.500c3-1.900 6.300-2 9.400-.2l-1.700 8.800c-3-1.800-6.300-1.700-9.300.2z" fill="#38a8ec"/><path d="M18.500 20c3 1.800 6.300 1.700 9.500-.2l-1.700 8.800c-3.200 2-6.500 2-9.500.2z" fill="#fdc01c"/>
<path d="M9.700 9c3-2 6.500-2.200 9.500-.3l-.5 2.500c-3-1.800-6.500-1.600-9.500.3zM20.800 9.300c3 1.800 6.300 1.600 9.600-.3l-.5 2.500c-3.300 1.900-6.600 2-9.600.3z" fill="#fff" opacity=".25"/></svg>
<svg class="abs" style="left:73px;top:731px" width="33" height="33" viewBox="0 0 33 33"><defs><radialGradient id="fg" cx="50%" cy="30%" r="65%"><stop offset="0" stop-color="#8fdcff"/><stop offset=".45" stop-color="#2478d8"/><stop offset="1" stop-color="#08206c"/></radialGradient><linearGradient id="ff" x1="0" y1="0" x2="1" y2=".25"><stop offset="0" stop-color="#e05a10"/><stop offset=".45" stop-color="#f07a14"/><stop offset=".8" stop-color="#ffa41c"/><stop offset="1" stop-color="#ffd23a"/></linearGradient><linearGradient id="fs" x1="0" y1="0" x2="0" y2="1"><stop offset=".45" stop-color="#b02c04" stop-opacity="0"/><stop offset="1" stop-color="#b02c04" stop-opacity=".8"/></linearGradient></defs>
<circle cx="18" cy="13" r="10.500" fill="url(#fg)"/>
<path d="M4.500 5.500c.5 1.500 1 2.500 2 3.500c-4 4-4.500 11-1 16c4.500 6.500 14 8 20.500 3.500c5.500-4 7.500-11 5.500-17c-.8-2.800-2.200-5-4-6.500c1.200 2.500 1.500 5 .8 7.500c1 4.500-1.500 9-6 10.500c-4.500 1.500-9-.5-10.500-4c2 1.200 4.500 1.200 6.500 0c1.200-.8 2.200-1.200 3.500-1c-1.500-2-4-2.500-6-1.600c-1.500.5-3 0-3.700-1.200c1.200-.5 2.200-1.500 2.700-3c-1.500-.6-2.500-1.800-2.800-3.200c1-.5 2-1.500 2.500-2.500c-1.500.2-3-.2-4-1c-2.300.2-4 .2-6-.5z" fill="url(#ff)"/><path d="M4.500 5.500c.5 1.500 1 2.500 2 3.500c-4 4-4.500 11-1 16c4.500 6.500 14 8 20.500 3.500c5.500-4 7.500-11 5.500-17c-.8-2.800-2.200-5-4-6.500c1.200 2.500 1.500 5 .8 7.500c1 4.500-1.500 9-6 10.500c-4.500 1.500-9-.5-10.500-4c2 1.200 4.500 1.200 6.500 0c1.200-.8 2.200-1.200 3.500-1c-1.500-2-4-2.500-6-1.600c-1.500.5-3 0-3.700-1.200c1.200-.5 2.200-1.500 2.700-3c-1.500-.6-2.500-1.800-2.800-3.200c1-.5 2-1.500 2.500-2.500c-1.500.2-3-.2-4-1c-2.300.2-4 .2-6-.5z" fill="url(#fs)"/></svg>
<div class="abs" style="left:129.5px;top:729px;width:53.5px;height:42px;border-radius:3px;border:1px solid #62758e;background:linear-gradient(135deg,#d3e2f5 0,#c6daf1 40%,#bdd3ee 60%,#c3d8f1 100%);box-shadow:inset 0 0 0 1px rgba(255,255,255,.6)"></div><div class="abs" style="left:125.5px;top:729px;width:53.5px;height:42px;border-radius:3px;border:1px solid #62758e;background:linear-gradient(135deg,#d3e2f5 0,#c6daf1 40%,#bdd3ee 60%,#c3d8f1 100%);box-shadow:inset 0 0 0 1px rgba(255,255,255,.6)"></div><div class="abs" style="left:121.5px;top:729px;width:53.5px;height:42px;border-radius:3px;border:1px solid #5d6f88;background:linear-gradient(135deg,#d3e2f5 0,#c6daf1 40%,#bdd3ee 60%,#c3d8f1 100%);box-shadow:inset 0 0 0 1px rgba(255,255,255,.7)"></div>
<div class="abs" style="left:183.5px;top:729px;width:59.0px;height:42px;border-radius:3px;border:1px solid #5d6f88;background:linear-gradient(135deg,#d3e2f5 0,#c6daf1 40%,#bdd3ee 60%,#c3d8f1 100%);box-shadow:inset 0 0 0 1px rgba(255,255,255,.7)"></div>
<div class="abs" style="left:245.5px;top:729px;width:58.5px;height:42px;border-radius:3px;border:1px solid #5d6f88;background:linear-gradient(135deg,#d3e2f5 0,#c6daf1 40%,#bdd3ee 60%,#c3d8f1 100%);box-shadow:inset 0 0 0 1px rgba(255,255,255,.7)"></div>
<div class="abs" style="left:315.5px;top:729px;width:50.5px;height:42px;border-radius:3px;border:1px solid #62758e;background:linear-gradient(135deg,#d3e2f5 0,#c6daf1 40%,#bdd3ee 60%,#c3d8f1 100%);box-shadow:inset 0 0 0 1px rgba(255,255,255,.6)"></div><div class="abs" style="left:311.5px;top:729px;width:50.5px;height:42px;border-radius:3px;border:1px solid #62758e;background:linear-gradient(135deg,#d3e2f5 0,#c6daf1 40%,#bdd3ee 60%,#c3d8f1 100%);box-shadow:inset 0 0 0 1px rgba(255,255,255,.6)"></div><div class="abs" style="left:307.5px;top:729px;width:50.5px;height:42px;border-radius:3px;border:1px solid #5d6f88;background:linear-gradient(135deg,#d3e2f5 0,#c6daf1 40%,#bdd3ee 60%,#c3d8f1 100%);box-shadow:inset 0 0 0 1px rgba(255,255,255,.7)"></div>
<div class="abs" style="left:369.5px;top:729px;width:58.5px;height:42px;border-radius:3px;border:1px solid #5d6f88;background:linear-gradient(135deg,#d3e2f5 0,#c6daf1 40%,#bdd3ee 60%,#c3d8f1 100%);box-shadow:inset 0 0 0 1px rgba(255,255,255,.7)"></div>
<div class="abs" style="left:432px;top:729px;width:58px;height:42px;border-radius:3px;border:1px solid #5d6f88;background:linear-gradient(135deg,#d3e2f5 0,#c6daf1 40%,#bdd3ee 60%,#c3d8f1 100%);box-shadow:inset 0 0 0 1px rgba(255,255,255,.7)"></div>
<div class="abs" style="left:494px;top:729px;width:58.5px;height:42px;border-radius:3px;border:1px solid #5d6f88;background:linear-gradient(135deg,#d3e2f5 0,#c6daf1 40%,#bdd3ee 60%,#c3d8f1 100%);box-shadow:inset 0 0 0 1px rgba(255,255,255,.7)"></div>
<div class="abs" style="left:555.5px;top:729px;width:59.0px;height:42px;border-radius:3px;border:1px solid #5d6f88;background:linear-gradient(135deg,#d3e2f5 0,#c6daf1 40%,#bdd3ee 60%,#c3d8f1 100%);box-shadow:inset 0 0 0 1px rgba(255,255,255,.7)"></div>
<div class="abs" style="left:617.5px;top:729px;width:59.0px;height:42px;border-radius:3px;border:1px solid #5d6f88;background:linear-gradient(180deg,#f2f6fb 0,#e6eef8 45%,#dbe6f4 55%,#e4edf8 100%);box-shadow:inset 0 0 0 1px rgba(255,255,255,.7)"></div>
<svg class="abs" style="left:131px;top:734px" width="35" height="31" viewBox="0 0 35 31"><path d="M1.500 4h10l2 2.500h8l2 2h10v19h-32z" fill="#f1d88a" stroke="#caa64a" stroke-width="1"/><rect x="4" y="1.500" width="8" height="3" fill="#fff"/><rect x="5" y="1.500" width="3" height="2.500" fill="#22b14c"/><rect x="12" y="3.500" width="8" height="3" fill="#fff"/><rect x="13" y="3.500" width="3" height="2.500" fill="#e03030"/><rect x="21" y="5.500" width="8" height="3" fill="#fff"/><rect x="21.500" y="5.500" width="3" height="2.500" fill="#2a8ae8"/>
<path d="M1.500 10h32v17.500h-32z" fill="#f7e5a2" stroke="#d2b45e" stroke-width="1"/><path d="M5.500 29.500v-8.500c0-3 1.500-4 4-4h16c2.500 0 4 1 4 4v8.500h-6v-6h-12v6z" fill="#8fd0f0" stroke="#4aa4d8" stroke-width="1" opacity=".95"/><path d="M7 21h21" stroke="#d8f0fc" stroke-width="1.500"/></svg>
<svg class="abs" style="left:198px;top:736px" width="30" height="27" viewBox="0 0 30 27"><rect x="6.500" y="2.500" width="19" height="22" fill="#bfe2f2" stroke="#7fb8d8"/><rect x="4" y="1.500" width="19" height="23" fill="#a8d6ec" stroke="#6aa8cc"/><rect x="1.500" y="1.500" width="19" height="23.500" fill="#9fd0ea" stroke="#5a9cc4"/><circle cx="11" cy="13" r="8.500" fill="#f47a10"/><circle cx="11" cy="13" r="8.500" fill="none" stroke="#ffb060" stroke-width="1" opacity=".8"/><path d="M7.800 7.500v11l9-5.500z" fill="#fff"/></svg>
<svg class="abs" style="left:259px;top:731px" width="33" height="33" viewBox="0 0 33 33"><defs><linearGradient id="at" x1="0" y1="0" x2="0" y2="1"><stop offset="0" stop-color="#ffb62e"/><stop offset=".55" stop-color="#f58a2a"/><stop offset="1" stop-color="#e03a34"/></linearGradient></defs><circle cx="16" cy="15" r="5.700" fill="none" stroke="url(#at)" stroke-width="3.400"/><path d="M22.500 9v8c0 3.500 6 3.500 6-2.500c0-7-5.500-12-12.500-12c-7.500 0-13 5.500-13 13c0 7.500 5.500 13 13 13c3 0 5.500-.8 7.500-2.200" fill="none" stroke="url(#at)" stroke-width="3.400" stroke-linecap="round"/></svg>
<svg class="abs" style="left:316px;top:731px" width="34" height="32" viewBox="0 0 34 32"><defs><linearGradient id="wd" x1="0" y1="0" x2="1" y2="1"><stop offset="0" stop-color="#dfe9f8"/><stop offset=".5" stop-color="#3a6fc8"/><stop offset="1" stop-color="#1a3f98"/></linearGradient></defs><path d="M10 1.500h16.500v18l-24 4v-12c0-6 3-10 7.500-10z" fill="url(#wd)" stroke="#7f9fd4" stroke-width=".8"/><path d="M9 6l23 2.500l-2.500 22l-21-5z" fill="#fbfcfe" stroke="#c4cfe0" stroke-width=".8"/><path d="M12 7.500l2.500 9l2.800-6.500l1.800 7l4-8.500" fill="none" stroke="#1f3f9c" stroke-width="2.200"/><path d="M23.500 10h6M23 12.500h6.500M22.500 15h7M11 19.500l18 1.500M11 22l17.500 1.500M12 24.500l16 1.500" stroke="#1f3f9c" stroke-width="1.500"/></svg>
<svg class="abs" style="left:382px;top:732px" width="33" height="32" viewBox="0 0 33 32"><defs><linearGradient id="np" x1="0" y1="0" x2="1" y2="1"><stop offset="0" stop-color="#d8f2f8"/><stop offset=".5" stop-color="#7fd0e4"/><stop offset="1" stop-color="#4ab4d4"/></linearGradient></defs><path d="M27 5l3.500 22l-6 3.500z" fill="#b08a50"/><path d="M12 3l16 2l-4 25.500l-17-4.500z" fill="#f4f6f6" stroke="#c8d0d4" stroke-width=".6"/><path d="M11 2.500l15 2.500l-6.500 22.500l-18-5z" fill="url(#np)"/><path d="M11 1.500l15.500 2.500" stroke="#667" stroke-width="2" stroke-dasharray="1 1.200"/><path d="M21 26l4-20" stroke="#cfd8dc" stroke-width="3" opacity=".7"/></svg>
<svg class="abs" style="left:444px;top:731px" width="33" height="34" viewBox="0 0 33 34"><defs><linearGradient id="dj" x1="0" y1="0" x2="1" y2="0"><stop offset="0" stop-color="#6a3fb8"/><stop offset=".6" stop-color="#5a30a4"/><stop offset="1" stop-color="#3a1c7c"/></linearGradient></defs><path d="M7 1h24v24l-7 7.500h-17z" fill="url(#dj)"/><path d="M31 25l-7 7.500l.5-7z" fill="#d8c8f0"/><path d="M9 1.500l10 14M12 1.500l9.500 13" stroke="#fff" stroke-width="1.400" fill="none"/><rect x="18.500" y="11.500" width="7.500" height="7.500" fill="#f9a01c" transform="rotate(-20 22 15)"/><circle cx="19" cy="14.500" r="1.300" fill="#fff"/><rect x="1" y="19.500" width="17" height="8.500" fill="#f9a81c" stroke="#c07800" stroke-width=".6"/></svg>
<div class="abs" style="left:446.500px;top:750.500px;font-size:9px;line-height:9px;font-weight:700;color:#1a1000;letter-spacing:-.6px;transform:scaleX(.85);transform-origin:0 0">DjVu</div>
<svg class="abs" style="left:511px;top:732px" width="24" height="31" viewBox="0 0 24 31"><rect x="1" y="1" width="21.500" height="28.500" rx="1.500" fill="#e0eefa" stroke="#4a8ed0" stroke-width="1.400"/><rect x="3" y="3" width="17.500" height="2" fill="#f9a01c"/><rect x="3.500" y="6" width="16.500" height="6.500" fill="#cfe4f6" stroke="#5a98d4" stroke-width=".8"/><path d="M15 7.500h2.500v3.500h-2.500z" fill="none" stroke="#2a5aa0" stroke-width=".9"/><rect x="3.2" y="15.0" width="2.500" height="2.400" fill="#4a94d8"/><rect x="6.800000000000001" y="15.0" width="2.500" height="2.400" fill="#4a94d8"/><rect x="10.4" y="15.0" width="2.500" height="2.400" fill="#4a94d8"/><rect x="14.0" y="15.0" width="2.500" height="2.400" fill="#4a94d8"/><rect x="17.6" y="15.0" width="2.500" height="2.400" fill="#4a94d8"/><rect x="3.2" y="18.5" width="2.500" height="2.400" fill="#fff"/><rect x="6.800000000000001" y="18.5" width="2.500" height="2.400" fill="#fff"/><rect x="10.4" y="18.5" width="2.500" height="2.400" fill="#fff"/><rect x="14.0" y="18.5" width="2.500" height="2.400" fill="#4a94d8"/><rect x="17.6" y="18.5" width="2.500" height="2.400" fill="#4a94d8"/><rect x="3.2" y="22.0" width="2.500" height="2.400" fill="#fff"/><rect x="6.800000000000001" y="22.0" width="2.500" height="2.400" fill="#fff"/><rect x="10.4" y="22.0" width="2.500" height="2.400" fill="#fff"/><rect x="14.0" y="22.0" width="2.500" height="2.400" fill="#4a94d8"/><rect x="17.6" y="22.0" width="2.500" height="2.400" fill="#f9a01c"/><rect x="3.2" y="25.5" width="2.500" height="2.400" fill="#fff"/><rect x="6.800000000000001" y="25.5" width="2.500" height="2.400" fill="#fff"/><rect x="10.4" y="25.5" width="2.500" height="2.400" fill="#fff"/><rect x="14.0" y="25.5" width="2.500" height="2.400" fill="#4a94d8"/><rect x="17.6" y="25.5" width="2.500" height="2.400" fill="#f9a01c"/></svg>
<svg class="abs" style="left:566px;top:732px" width="40" height="34" viewBox="0 0 40 34"><defs><linearGradient id="mg" x1="0" y1="0" x2="0" y2="1"><stop offset="0" stop-color="#2c465c"/><stop offset=".5" stop-color="#3a5a74"/><stop offset="1" stop-color="#5c7e96"/></linearGradient></defs><text x="19.500" y="31.500" text-anchor="middle" font-family="Liberation Sans" font-weight="700" font-size="37.500" fill="url(#mg)" stroke="url(#mg)" stroke-width="1.600" textLength="32" lengthAdjust="spacingAndGlyphs">M</text></svg>
<svg class="abs" style="left:630px;top:731px" width="34" height="34" viewBox="0 0 34 34"><defs><linearGradient id="kb" x1="0" y1="0" x2="0" y2="1"><stop offset="0" stop-color="#2a84e8"/><stop offset=".55" stop-color="#1a64cc"/><stop offset="1" stop-color="#7cc4f8"/></linearGradient></defs><path d="M17 .8l15 8.200v16l-15 8.200l-15-8.200v-16z" fill="#fdfdfd" stroke="#c4c8ce" stroke-width="1"/><path d="M17 1v6M2.500 25l4-2.500M31.500 25l-4-2.500" stroke="#d8dade" stroke-width=".8"/><path d="M3 13.500v5.500c0 4.500 6.300 8 14 8s14-3.500 14-8v-5.500z" fill="url(#kb)"/><ellipse cx="17" cy="13.500" rx="14" ry="7.800" fill="#3492f0"/><ellipse cx="17" cy="13.500" rx="10.500" ry="5.400" fill="#0e3c9a"/><path d="M12.500 8.700v9.600M13 14.500l9.500-6M14.500 13.800l9.500 5" stroke="#3c9cf6" stroke-width="2.600" fill="none"/></svg>
<div class="abs" style="left:1128.5px;top:739px;font-size:12px;line-height:14px;color:#f2f2ec;font-weight:400;white-space:pre;transform:scaleX(0.8822);transform-origin:0 0;">RU</div>
<svg class="abs" style="left:1159px;top:746px" width="9" height="6" viewBox="0 0 9 6"><path d="M4.500 .5l4 5h-8z" fill="#fff" stroke="#8a97a8" stroke-width=".6"/></svg>
<svg class="abs" style="left:1179px;top:740px" width="17" height="17" viewBox="0 0 17 17"><circle cx="8.500" cy="8.500" r="7.600" fill="#fff" stroke="#2356c8" stroke-width="1.500"/><path d="M13 3.500a7 7 0 0 1 0 10a9 9 0 0 0 0-10z" fill="#2356c8" opacity=".8"/><path d="M10 2.500l-4.500 6.500h3l-1.500 5.500l5-7h-3z" fill="#1c4fd0"/></svg>
<svg class="abs" style="left:1203px;top:740px" width="17" height="18" viewBox="0 0 17 18"><rect x="2" y="3" width="9" height="13" rx="1.500" fill="#fff" stroke="#333a44" stroke-width="1.200"/><rect x="4.500" y="1.500" width="7" height="12" rx="1" fill="#fff" stroke="#333a44" stroke-width="1"/><path d="M8.500 2v3M13.500 2v3" stroke="#333a44" stroke-width="1.600"/><path d="M6.500 5h9v3.500c0 2-1.500 3-3 3v4h-2.500v-4c-2 0-3.500-1-3.500-3z" fill="#fff" stroke="#333a44" stroke-width="1.100"/></svg>
<svg class="abs" style="left:1227px;top:742px" width="17" height="14" viewBox="0 0 17 14"><rect x="0.7" y="10.0" width="2.600" height="2.5" fill="#fff" stroke="#3a4250" stroke-width=".8"/><rect x="3.8" y="8.0" width="2.600" height="4.5" fill="#fff" stroke="#3a4250" stroke-width=".8"/><rect x="6.9" y="6.0" width="2.600" height="6.5" fill="#fff" stroke="#3a4250" stroke-width=".8"/><rect x="10.0" y="3.5" width="2.600" height="9" fill="#fff" stroke="#3a4250" stroke-width=".8"/><rect x="13.1" y="1.0" width="2.600" height="11.5" fill="#fff" stroke="#3a4250" stroke-width=".8"/></svg>
<svg class="abs" style="left:1253px;top:740px" width="16" height="18" viewBox="0 0 16 18"><path d="M1.500 6h3l4.500-4.500v15l-4.500-4.500h-3z" fill="#fff" stroke="#4a5260" stroke-width="1"/><path d="M11.500 6.500c1.500 1.500 1.500 4 0 5.500" fill="none" stroke="#e8edf2" stroke-width="1.300"/></svg>
<div class="abs" style="left:1299.8px;top:734px;font-size:12px;line-height:14px;color:#fff;font-weight:400;white-space:pre;transform:scaleX(0.8857);transform-origin:0 0;">22:37</div>
<div class="abs" style="left:1285.6px;top:751px;font-size:12px;line-height:14px;color:#fff;font-weight:400;white-space:pre;transform:scaleX(0.8991);transform-origin:0 0;">05.12.2010</div>
<div class="abs" style="left:1351px;top:728px;width:16px;height:41px;border:1px solid #c9d3de;background:linear-gradient(180deg,#a8b4c4 0,#8494a8 25%,#7e90a6 55%,#9ab4d2 85%,#aecbea 100%);box-shadow:-1px 0 0 rgba(60,70,90,.5)"></div>
<!--TASKBAR-->
</body>
</html>
